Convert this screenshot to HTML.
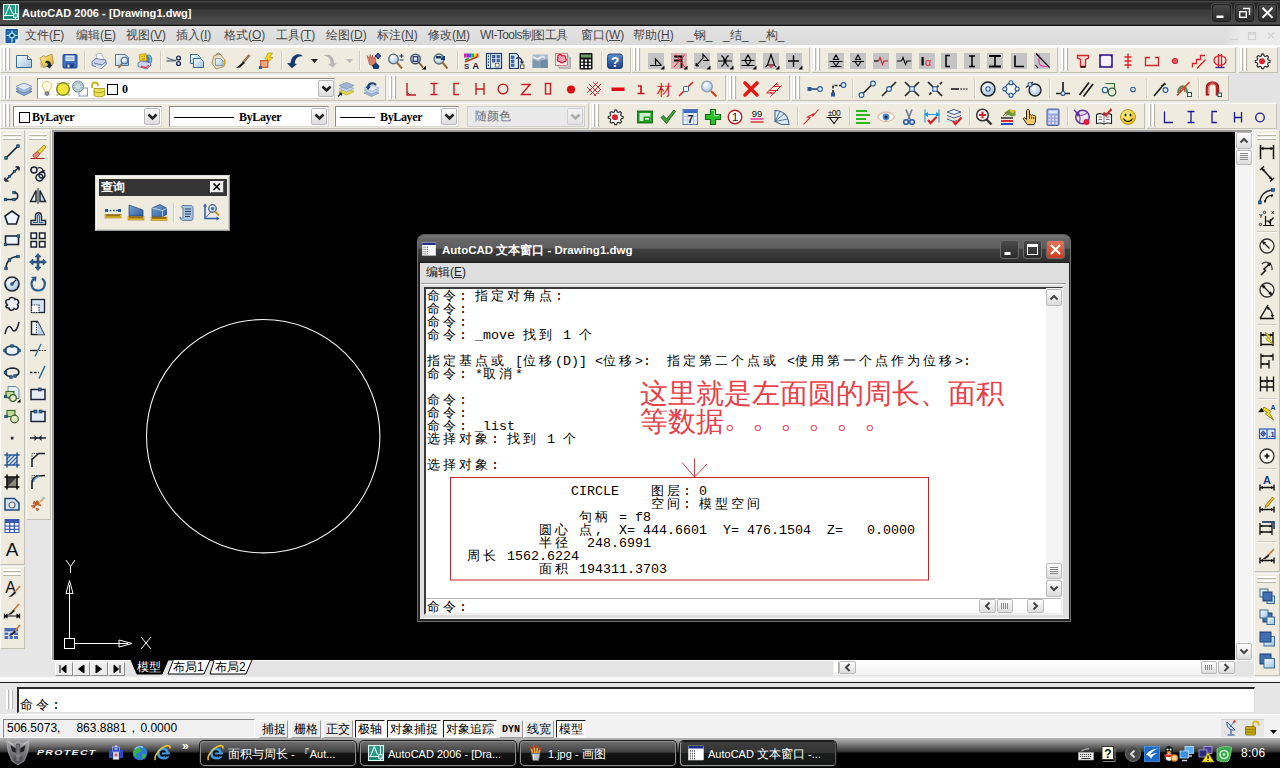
<!DOCTYPE html>
<html lang="zh"><head><meta charset="utf-8"><title>AutoCAD 2006 - [Drawing1.dwg]</title>
<style>
html,body{margin:0;padding:0}
body{width:1280px;height:768px;position:relative;overflow:hidden;background:#ebebeb;font-family:"Liberation Sans",sans-serif;font-size:12px;color:#000}
div,svg.i,span.a{position:absolute;box-sizing:border-box}
svg.i{overflow:visible}
.tb{background:#efebde;border:1px solid;border-color:#fbfbf8 #c4c1b4 #c4c1b4 #fbfbf8}
.grip{background:#fff;border-right:1px solid #b9b6a9}
.gripH{background:#fff;border-bottom:1px solid #b9b6a9}
.sep{width:1px;background:#d0cdc0;border-right:1px solid #f9f8f3;box-sizing:content-box}
.sepH{height:1px;background:#d0cdc0;border-bottom:1px solid #f9f8f3;box-sizing:content-box}
.menu{top:26px;height:19px;line-height:19px;color:#474747;font-size:12px;white-space:nowrap}
.combo{background:#fff;border:1px solid #8b8b8b;border-right-color:#d8d8d8;border-bottom-color:#d8d8d8}
.dd{background:linear-gradient(#fdfdfd,#dcdcdc);border:1px solid #b9b9b9;border-radius:2px}
.mono{font-family:"Liberation Mono",monospace}
.serif{font-family:"Liberation Serif",serif}
.tw{font-family:"Liberation Mono",monospace;font-size:13.33px;line-height:13px;white-space:pre;color:#000}
.tw .c{font-size:13px;letter-spacing:3px;font-family:"Liberation Mono",monospace}
.sb{top:720px;height:18px;line-height:17px;font-size:12px;text-align:center;white-space:nowrap;border:1px solid;overflow:hidden}
.sb.up{border-color:#fff #9a9a9a #9a9a9a #fff;background:#ececec}
.sb.dn{border-color:#1a1a1a #fff #fff #1a1a1a;background:#fafafa}
.tk{top:741px;height:25px;border:1px solid #8c8c8c;border-radius:4px;box-shadow:0 0 0 1px #1c1c1c;background:linear-gradient(#6c6c6c 0,#404040 45%,#151515 47%,#0a0a0a 100%);color:#fff;font-size:11px;line-height:24px;white-space:nowrap;overflow:hidden}
.tk .c{font-size:12px}
.t{white-space:nowrap}
</style></head>
<body>
<svg width="0" height="0" style="position:absolute"><defs>
<linearGradient id="gB" x1="0" y1="0" x2="1" y2="1"><stop offset="0" stop-color="#fafdff"/><stop offset="1" stop-color="#9cc3dc"/></linearGradient>
<linearGradient id="gBd" x1="0" y1="0" x2="1" y2="1"><stop offset="0" stop-color="#7aa7d6"/><stop offset="1" stop-color="#2d5a9a"/></linearGradient>
<linearGradient id="gY" x1="0" y1="0" x2="1" y2="1"><stop offset="0" stop-color="#fff3a0"/><stop offset="1" stop-color="#d9a520"/></linearGradient>
<linearGradient id="gG" x1="0" y1="0" x2="0" y2="1"><stop offset="0" stop-color="#f4f4f4"/><stop offset="1" stop-color="#9aa4b4"/></linearGradient>
<radialGradient id="gLens" cx=".4" cy=".35" r=".7"><stop offset="0" stop-color="#fff"/><stop offset="1" stop-color="#9fc0dc"/></radialGradient>
<radialGradient id="gSm" cx=".4" cy=".35" r=".7"><stop offset="0" stop-color="#fff9a0"/><stop offset="1" stop-color="#e8b800"/></radialGradient>
<linearGradient id="gHelp" x1="0" y1="0" x2="0" y2="1"><stop offset="0" stop-color="#5b8fd0"/><stop offset="1" stop-color="#1b3f85"/></linearGradient>
<linearGradient id="gMag" x1="0" y1="0" x2="1" y2="0"><stop offset="0" stop-color="#8a1c1c"/><stop offset=".5" stop-color="#e06a6a"/><stop offset="1" stop-color="#8a1c1c"/></linearGradient>
<linearGradient id="gTF" x1="0" y1="0" x2="0" y2="1"><stop offset="0" stop-color="#a8a8ae"/><stop offset=".5" stop-color="#77777c"/><stop offset="1" stop-color="#4a4a4e"/></linearGradient>
</defs></svg>
<div style="left:0px;top:0px;width:1280px;height:26px;background:linear-gradient(#202020 0,#222 3%,#525252 6.500%,#272727 11%,#2a2a2a 31%,#393939 40%,#4e4e4e 93%,#111 96.500%,#111 100%)"></div>
<svg class="i" style="left:0.5px;top:2.0px" width="20" height="20" viewBox="0 0 20 20"><rect x="2.500" y="2.500" width="15" height="15" fill="#2a9a86" stroke="#dffff6" stroke-width="1.100"/><path d="M4.500 13L8.300 3.800L11.500 11.500" fill="none" stroke="#dffff6" stroke-width="1.100"/><path d="M3 13.500H17M14.500 3V17" stroke="#dffff6" stroke-width="1"/><rect x="3.500" y="14.500" width="9.500" height="2" fill="#1f8070"/><rect x="12.700" y="11.700" width="3.600" height="3.600" fill="#2a9a86" stroke="#dffff6" stroke-width="1"/></svg>
<div class="t" style="left:22px;top:5px;color:#fff;font-weight:bold;font-size:11px;line-height:16px;letter-spacing:.05px">AutoCAD 2006 - [Drawing1.dwg]</div>
<div style="left:1212px;top:4px;width:19px;height:18px;background:linear-gradient(#484848,#2c2c2c);border:1px solid #222;border-radius:3px;box-shadow:0 0 0 1px #4a4a4a"></div>
<div style="left:1235px;top:4px;width:19px;height:18px;background:linear-gradient(#484848,#2c2c2c);border:1px solid #222;border-radius:3px;box-shadow:0 0 0 1px #4a4a4a"></div>
<div style="left:1258px;top:4px;width:19px;height:18px;background:linear-gradient(#484848,#2c2c2c);border:1px solid #222;border-radius:3px;box-shadow:0 0 0 1px #4a4a4a"></div>
<svg class="i" style="left:1212px;top:4px" width="66" height="18"><rect x="4.500" y="11.500" width="7" height="2.500" fill="#fff"/><path d="M31 4.500h6.500v6.500" fill="none" stroke="#fff" stroke-width="1.400"/><rect x="27.700" y="7.700" width="6.600" height="5.600" fill="none" stroke="#fff" stroke-width="1.400"/><path d="M50.500 3.800l10 10M60.500 3.800l-10 10" stroke="#fff" stroke-width="2" fill="none"/></svg>
<div style="left:0px;top:26px;width:1280px;height:20px;background:linear-gradient(#e4e4e4,#dadada)"></div>
<div style="left:1225px;top:26px;width:55px;height:20px;background:linear-gradient(90deg,#dedede,#ebebeb 30%)"></div>
<div style="left:0px;top:45px;width:1280px;height:2px;background:#fff"></div>
<svg class="i" style="left:1.0px;top:24.5px" width="22" height="22" viewBox="0 0 20 20"><path d="M3.500 3h12.500v10.500l-3 3.500h-9.500z" fill="#1c5a9c" stroke="#eaf4ff" stroke-width="1.200"/><path d="M10 5v11M5 9.500h10" stroke="#9ae8f0" stroke-width="1.200"/><circle cx="10" cy="9.500" r="2.200" fill="#1c5a9c" stroke="#9ae8f0" stroke-width="1.100"/><circle cx="10" cy="9.500" r=".9" fill="#012"/><path d="M13 16.500l3-3.500h-3z" fill="#eaf4ff"/><path d="M6 6h1M13 6h1M6 13h1M7 11h1M13 12h1" stroke="#5ac0e0" stroke-width="1"/></svg>
<svg class="i" style="left:1228px;top:28px" width="50" height="16"><g fill="none" stroke="#cfcfcf" stroke-width="1.200"><path d="M3 11.500h7"/><rect x="20.500" y="4.500" width="7" height="7"/><path d="M20.500 6h7"/><path d="M40 4.500l6 6M46 4.500l-6 6"/></g></svg>
<div style="left:0px;top:47px;width:1280px;height:84px;background:#ebebe9"></div>
<div style="left:1229px;top:73px;width:51px;height:29px;background:#e3e3e3"></div>
<div style="left:1277px;top:47px;width:3px;height:84px;background:#e3e3e3"></div>
<div style="left:0px;top:131px;width:53px;height:545px;background:#e6e6e6"></div>
<div style="left:1252px;top:131px;width:28px;height:545px;background:#e6e6e6"></div>
<div style="left:51px;top:130px;width:1202px;height:531px;background:#fff"></div>
<div style="left:52px;top:130px;width:1200px;height:530px;background:#9c9c9c"></div>
<div style="left:54px;top:132px;width:1181px;height:529px;background:#000"></div>
<div style="left:1235px;top:132px;width:17px;height:528px;background:#f4f4f4"></div>
<div style="left:53px;top:660px;width:1199px;height:16px;background:#e4e4e4"></div>
<div style="left:0px;top:676px;width:1280px;height:42px;background:#e6e6e6"></div>
<div style="left:0px;top:676px;width:1280px;height:6px;background:linear-gradient(#e8e8e8,#fdfdfd 40%,#f0f0f0)"></div>
<div style="left:0px;top:682px;width:1280px;height:1px;background:#1a1a1a"></div>
<div style="left:17px;top:687px;width:1238px;height:26px;background:#fff;border-top:2px solid #2a2a2a;border-left:2px solid #2a2a2a;border-right:1px solid #ddd;border-bottom:1px solid #ddd"></div>
<div style="left:0px;top:714px;width:1280px;height:24px;background:#f2f2f2;border-top:1px solid #fff"></div>
<div style="left:0px;top:738px;width:1280px;height:30px;background:linear-gradient(#b6b6b6 0,#a8a8a8 6%,#2e2e2e 47%,#000 49.500%,#000 100%)"></div>
<div class="menu" style="left:25px">文件(<u>F</u>)</div>
<div class="menu" style="left:76px">编辑(<u>E</u>)</div>
<div class="menu" style="left:126px">视图(<u>V</u>)</div>
<div class="menu" style="left:176px">插入(<u>I</u>)</div>
<div class="menu" style="left:224px">格式(<u>O</u>)</div>
<div class="menu" style="left:276px">工具(<u>T</u>)</div>
<div class="menu" style="left:326px">绘图(<u>D</u>)</div>
<div class="menu" style="left:377px">标注(<u>N</u>)</div>
<div class="menu" style="left:428px">修改(<u>M</u>)</div>
<div class="menu" style="left:480px"><span style="letter-spacing:-.6px">WI-Tools制图工具</span></div>
<div class="menu" style="left:581px">窗口(<u>W</u>)</div>
<div class="menu" style="left:633px">帮助(<u>H</u>)</div>
<div class="menu" style="left:687px">_钢_</div>
<div class="menu" style="left:723px">_结_</div>
<div class="menu" style="left:759px">_构_</div>
<div class="tb" style="left:0px;top:47px;width:631px;height:26px;"></div>
<div style="left:1px;top:48px;width:10px;height:24px;background:#e7e6e0"></div>
<div class="grip" style="left:3px;top:48px;width:3px;height:23px;"></div>
<div class="grip" style="left:7px;top:48px;width:3px;height:23px;"></div>
<svg class="i" style="left:14.0px;top:51.0px" width="20" height="20" viewBox="0 0 20 20"><path d="M2.500 4.500H13.500L17.500 8.500V16.500H2.500Z" fill="url(#gB)" stroke="#3f6a94"/><path d="M13.500 4.500V8.500H17.500" fill="#e8f2fa" stroke="#3f6a94"/></svg>
<svg class="i" style="left:37.0px;top:51.0px" width="20" height="20" viewBox="0 0 20 20"><path d="M3 7l4 -2.500 1 1.500 7-3 1.500 9.500-10 4z" fill="url(#gY)" stroke="#a8893a" stroke-width=".8"/><path d="M3 7l3 10 -2.500-1z" fill="#cdbf8a"/><path d="M9 10c3-1 5 1 5 4l2-.5-3.500 4-3.500-2.500 2-.5c0-2-1-3-3-2.500z" fill="#1d2a3a"/></svg>
<svg class="i" style="left:60.0px;top:51.0px" width="20" height="20" viewBox="0 0 20 20"><rect x="3" y="3.500" width="14" height="13.500" rx="1" fill="#3f6fc0" stroke="#24458a"/><rect x="5.500" y="4.500" width="9" height="5.500" fill="#d6e6f6"/><path d="M6.500 6.500h7M6.500 8h7" stroke="#8ab" stroke-width=".7"/><rect x="6" y="12.500" width="8" height="4.500" fill="#24458a"/><rect x="7.500" y="13.500" width="2" height="3" fill="#cfe0f4"/></svg>
<svg class="i" style="left:89.0px;top:51.0px" width="20" height="20" viewBox="0 0 20 20"><path d="M7 3.500l5-1.500 3 6-6 2z" fill="#fff" stroke="#8899bb" stroke-width=".7"/><path d="M3 10.500l4-3 9.500 1.500 1 4-5 4.500-9.500-3z" fill="#c9d3ea" stroke="#5566a0" stroke-width=".8"/><path d="M5 12l8 2 4-3.500" fill="none" stroke="#5566a0" stroke-width=".8"/><path d="M7 15.500l5 1.200 3-2.700" fill="none" stroke="#fff" stroke-width="1.2"/></svg>
<svg class="i" style="left:112.0px;top:51.0px" width="20" height="20" viewBox="0 0 20 20"><path d="M3.500 3.500H13L16.500 6.500V14.500H3.500Z" fill="url(#gB)" stroke="#56779a"/><circle cx="12.500" cy="9.500" r="3.300" fill="url(#gLens)" stroke="#4a6a8a" stroke-width="1.100"/><path d="M10 12.500L6.500 17" stroke="#9a6a4a" stroke-width="1.700"/></svg>
<svg class="i" style="left:135.0px;top:51.0px" width="20" height="20" viewBox="0 0 20 20"><path d="M11 4c4-2 7 2 6 6s-4 5-6 4z" fill="#3f7fc8"/><path d="M13 5c2 0 3 3 2 6" stroke="#9fd0f0" fill="none" stroke-width="1.200"/><rect x="4.500" y="3" width="7" height="7" rx="1" fill="#f4d21c" stroke="#b08a10" stroke-width=".7" transform="rotate(-8 8 6)"/><path d="M6.500 5.500h1M9 5.200h1M6.800 7.600c1 .8 2 .7 3-.2" stroke="#7a5a00" stroke-width=".8" fill="none"/><path d="M3 12l3-2 9 1.500 1 2.500-4 4-9-2.500z" fill="#c9d3ea" stroke="#5566a0" stroke-width=".8"/><path d="M6 15.500l5 1.200 3-2.400" fill="none" stroke="#e04040" stroke-width="1.300"/></svg>
<svg class="i" style="left:164.0px;top:51.0px" width="20" height="20" viewBox="0 0 20 20"><path d="M2.500 6.500l9 3.500M2.500 10l9.500 -.5" stroke="#4a5a7a" stroke-width="1.300" fill="none"/><path d="M2.500 6.500l6 1.500M2.500 10l6-.8" stroke="#c8d0e0" stroke-width=".5"/><circle cx="14.500" cy="7" r="1.900" fill="none" stroke="#1d2f5a" stroke-width="1.400"/><circle cx="14.500" cy="12.500" r="1.900" fill="none" stroke="#1d2f5a" stroke-width="1.400"/></svg>
<svg class="i" style="left:187.0px;top:51.0px" width="20" height="20" viewBox="0 0 20 20"><path d="M3.500 3.500H10.500L13.500 6.500V12.500H3.500Z" fill="url(#gB)" stroke="#3f6a94"/><path d="M6.500 7.500H13.500L16.500 10.500V16.500H6.500Z" fill="url(#gB)" stroke="#3f6a94"/></svg>
<svg class="i" style="left:209.0px;top:51.0px" width="20" height="20" viewBox="0 0 20 20"><path d="M5 4.500l6-1.500 5 6-1 6.500-8 2.500-4-6z" fill="#e9dfc0" stroke="#9a8a5a" stroke-width=".9"/><path d="M7 3.500l2.500-1.500 2 1.500" fill="none" stroke="#777" stroke-width="1"/><path d="M6.500 7.500h5l2.500 2.500v4.500h-7.500z" fill="url(#gB)" stroke="#6f8aa4" stroke-width=".8"/><path d="M15 9c1.500 1.500 1.500 3 .5 4.500" stroke="#d9a520" stroke-width="1.200" fill="none"/></svg>
<svg class="i" style="left:233.0px;top:51.0px" width="20" height="20" viewBox="0 0 20 20"><path d="M16.500 4l-7 8" stroke="#7a5a3a" stroke-width="2.200"/><path d="M16.500 4l-7 8" stroke="#c0a070" stroke-width=".8"/><path d="M10.500 10.500l1.500 1.500-5 4.500-4 .5 3-2.500z" fill="#1a1a1a"/></svg>
<svg class="i" style="left:256.0px;top:51.0px" width="20" height="20" viewBox="0 0 20 20"><path d="M12 2l4.500 0-3 4.500 3.500 0-7.500 7 2.500-5.500-3 0z" fill="#f8d81c" stroke="#b8940a" stroke-width=".7"/><rect x="4.500" y="9.500" width="7.500" height="7" fill="#f08a5a" stroke="#b0501a" stroke-width=".8"/><rect x="5.500" y="10.500" width="5.500" height="5" fill="#f6b090" opacity=".7"/><rect x="3" y="15" width="3" height="3" fill="#2a5aa8"/></svg>
<svg class="i" style="left:285.0px;top:51.0px" width="20" height="20" viewBox="0 0 20 20"><path d="M2 12.300L6.900 17.300L11.900 13L9.800 12.500C10 8 13 4.500 17.800 5.500C16 1.500 6.500 2 5.500 12Z" fill="#17386c"/></svg>
<svg class="i" style="left:320.0px;top:51.0px" width="20" height="20" viewBox="0 0 20 20"><path d="M3 5C8 1.500 13.500 4 14.300 12.300L16.900 12.300L12.500 16.800L8 13L10.800 12.600C10.500 7 7.500 4.500 3 5Z" fill="#b8b8b8"/></svg>
<svg class="i" style="left:363.0px;top:51.0px" width="20" height="20" viewBox="0 0 20 20"><path d="M4 4.500l2.500 3 .5-4 1.500 3.800 1-3.300 1 4 1.500-2.500 1 6.500-2.500 3-4-1.500z" fill="#d8806a" stroke="#a04a3a" stroke-width=".6"/><path d="M9 14.500l4-3 3.500 3.500-1 3h-5z" fill="#1d3a6a"/><path d="M15 2v6M12 5h6M15 2l-1.200 1.500h2.400zM15 8l-1.200-1.500h2.400zM12 5l1.500-1.200v2.400zM18 5l-1.500-1.200v2.400z" stroke="#1d3a8a" stroke-width=".9" fill="#1d3a8a"/></svg>
<svg class="i" style="left:386.0px;top:51.0px" width="20" height="20" viewBox="0 0 20 20"><circle cx="7.500" cy="8" r="4.800" fill="url(#gLens)" stroke="#556a7a" stroke-width="1.300"/><path d="M11 11.500l5 6" stroke="#9a6a3a" stroke-width="2"/><path d="M15.500 3v4M13.500 5h4M13.500 9h4" stroke="#1d2a5a" stroke-width="1.100"/></svg>
<svg class="i" style="left:408.0px;top:51.0px" width="20" height="20" viewBox="0 0 20 20"><circle cx="7.500" cy="8" r="4.800" fill="url(#gLens)" stroke="#445a6a" stroke-width="1.400"/><rect x="5.200" y="5.700" width="4.600" height="4.600" fill="none" stroke="#1d2a6a" stroke-width="1.200"/><path d="M11 11.500l4 5" stroke="#7a5a3a" stroke-width="2"/><path d="M18 14.500v4h-4z" fill="#000"/></svg>
<svg class="i" style="left:431.0px;top:51.0px" width="20" height="20" viewBox="0 0 20 20"><circle cx="8" cy="8" r="5" fill="url(#gLens)" stroke="#556a7a" stroke-width="1.300"/><path d="M5 5h5.500v2.500l2-2.500 1.500 0v4h-4v-1.500h-5z" fill="#1d3a6a"/><path d="M11.500 11.500l5 6" stroke="#9a6a3a" stroke-width="2"/></svg>
<svg class="i" style="left:461.0px;top:51.0px" width="20" height="20" viewBox="0 0 20 20"><rect x="3" y="2.500" width="2.500" height="4" fill="#e01ca0"/><rect x="5.500" y="2.500" width="2.500" height="4" fill="#8a2be2"/><rect x="8" y="2.500" width="2.500" height="4" fill="#2a6ae0"/><rect x="10.500" y="2.500" width="2.500" height="4" fill="#1cc03a"/><rect x="13" y="2.500" width="2.500" height="4" fill="#f0d01c"/><rect x="15.500" y="2.500" width="2" height="4" fill="#e83a1c"/><path d="M4 11l12-5" stroke="#c03a2a" stroke-width="1.600"/><path d="M4 9l4-1.500" stroke="#2a9a3a" stroke-width="1.500"/><text x="3" y="17.500" font-family="Liberation Sans,sans-serif" font-size="8" font-weight="bold" fill="#3a3a5a">S</text><text x="11.500" y="17.500" font-family="Liberation Sans,sans-serif" font-size="9" font-weight="bold" fill="#1a1a2a">A</text></svg>
<svg class="i" style="left:484.0px;top:51.0px" width="20" height="20" viewBox="0 0 20 20"><rect x="2.500" y="2.500" width="15" height="15" fill="#dcebf8" stroke="#1d3a6a" stroke-width="1.200"/><path d="M6.500 3v14" stroke="#1d3a6a" stroke-width=".8"/><path d="M4.500 4.500v11" stroke="#1d3a6a" stroke-width="1" stroke-dasharray="1.500 1.500"/><g fill="#4a7ab8" stroke="#1d3a6a" stroke-width=".6"><rect x="8.500" y="4.500" width="2.500" height="2.500"/><rect x="13" y="4.500" width="2.500" height="2.500"/><rect x="8.500" y="8.500" width="2.500" height="2.500"/><rect x="13" y="8.500" width="2.500" height="2.500"/></g><rect x="11.500" y="12.500" width="3.500" height="3.500" fill="#fffbe0" stroke="#555" stroke-width=".7"/></svg>
<svg class="i" style="left:507.0px;top:51.0px" width="20" height="20" viewBox="0 0 20 20"><path d="M2.500 2.500H9.500L11.500 4.500V17.500H2.500Z" fill="#dcebf8" stroke="#1d3a6a" stroke-width="1.200"/><g fill="#4a7ab8" stroke="#1d3a6a" stroke-width=".6"><rect x="4.500" y="5" width="2.500" height="2.500"/><rect x="4.500" y="9" width="2.500" height="2.500"/><rect x="4.500" y="13" width="2.500" height="2.500"/></g><path d="M9 7.500c3.500-2 6 0 6 3.500" fill="none" stroke="#1d2a4a" stroke-width="1.300"/><path d="M12.800 10.500h4.400l-2.200 2.700z" fill="#1d2a4a"/><rect x="13.500" y="14" width="3.500" height="3.500" fill="#fffbe0" stroke="#333" stroke-width=".8"/></svg>
<svg class="i" style="left:530.0px;top:51.0px" width="20" height="20" viewBox="0 0 20 20"><rect x="2.500" y="3.500" width="15.500" height="13.500" fill="#a9bccb"/><path d="M2.500 8l6 2.500 3-2 6.500 2v6.500h-15.500z" fill="#7f9bb2"/><path d="M3 6l5 2 4-2.500 3 1" stroke="#e4edf4" stroke-width="1.800" fill="none"/><path d="M11 10l6.500-2v9h-6.500z" fill="#6f8ca6"/></svg>
<svg class="i" style="left:553.0px;top:51.0px" width="20" height="20" viewBox="0 0 20 20"><path d="M6.500 6.500h11v11h-11z" fill="#c8c8c8" stroke="#9a9a9a" stroke-width=".6"/><path d="M5 5h11v11h-11z" fill="#e6e6e6" stroke="#9a9a9a" stroke-width=".6"/><rect x="2.500" y="2.500" width="12" height="12" fill="#fbe6ea" stroke="#c05a6a" stroke-width=".7"/><path d="M5 5c1-2 3-2 4 0 2-1.500 4 0 3.500 2 1.500 1.500.5 4-1.500 3.500-1 2-3.500 1.500-4-.0-2.500.5-3.500-2-2-3.500-1-1 0-2.500 0-2z" fill="#f6a8b4" stroke="#d8203a" stroke-width="1.300"/></svg>
<svg class="i" style="left:576.0px;top:51.0px" width="20" height="20" viewBox="0 0 20 20"><rect x="3.500" y="2" width="13" height="16.500" rx="1" fill="#141414"/><rect x="5" y="3.500" width="10" height="3" fill="#6a9a6a"/><g fill="#fff"><rect x="5" y="8.500" width="2.200" height="2"/><rect x="8.900" y="8.500" width="2.200" height="2"/><rect x="12.800" y="8.500" width="2.200" height="2"/><rect x="5" y="11.800" width="2.200" height="2"/><rect x="8.900" y="11.800" width="2.200" height="2"/><rect x="12.800" y="11.800" width="2.200" height="2"/><rect x="5" y="15.100" width="2.200" height="2"/><rect x="8.900" y="15.100" width="2.200" height="2"/><rect x="12.800" y="15.100" width="2.200" height="2"/></g></svg>
<svg class="i" style="left:605.0px;top:51.0px" width="20" height="20" viewBox="0 0 20 20"><rect x="2.500" y="3" width="15" height="14.500" rx="2.500" fill="url(#gHelp)" stroke="#16306a" stroke-width=".8"/><text x="10" y="15.500" text-anchor="middle" font-family="Liberation Sans,sans-serif" font-size="14" font-weight="bold" fill="#fff">?</text></svg>
<div class="sep" style="left:84px;top:51px;width:1px;height:19px;"></div>
<div class="sep" style="left:160px;top:51px;width:1px;height:19px;"></div>
<div class="sep" style="left:281px;top:51px;width:1px;height:19px;"></div>
<div class="sep" style="left:359px;top:51px;width:1px;height:19px;"></div>
<div class="sep" style="left:457px;top:51px;width:1px;height:19px;"></div>
<div class="sep" style="left:601px;top:51px;width:1px;height:19px;"></div>
<svg class="i" style="left:311px;top:59px" width="7" height="4"><path d="M0 0h7L3.5 4z" fill="#222"/></svg>
<svg class="i" style="left:346px;top:59px" width="7" height="4"><path d="M0 0h7L3.5 4z" fill="#bbb"/></svg>
<div class="tb" style="left:631px;top:47px;width:179px;height:26px;"></div>
<div style="left:632px;top:48px;width:9px;height:24px;background:#e7e6e0"></div>
<div class="grip" style="left:633px;top:48px;width:3px;height:23px;"></div>
<div class="grip" style="left:637px;top:48px;width:3px;height:23px;"></div>
<svg class="i" style="left:646.0px;top:51.0px" width="20" height="20" viewBox="0 0 20 20"><rect x="2" y="2" width="16" height="16" fill="#c4c4c4"/><path d="M4 14.500h11M9.500 14.500V8l6 6.500" fill="none" stroke="#000" stroke-width="1.200"/><path d="M18.500 14.500v4h-4z" fill="#000"/></svg>
<svg class="i" style="left:669.0px;top:51.0px" width="20" height="20" viewBox="0 0 20 20"><rect x="2" y="2" width="16" height="16" fill="#d8b4b4"/><path d="M5 5.500h8.500M5 9.500h8.500M12.500 5v12" stroke="#000" stroke-width="1.800" fill="none"/><path d="M5 16L16 3.500M7 3.500l9 13" stroke="#d8202a" stroke-width="1" fill="none"/><path d="M18.500 14.500v4h-4z" fill="#000"/></svg>
<svg class="i" style="left:692.0px;top:51.0px" width="20" height="20" viewBox="0 0 20 20"><rect x="2" y="2" width="16" height="16" fill="#c4c4c4"/><path d="M4 15l7-8M4 15l.3-3M4 15l3-.3M11 7V3.500l5.500 6H11" fill="none" stroke="#000" stroke-width="1.100"/><path d="M18.500 14.500v4h-4z" fill="#000"/></svg>
<svg class="i" style="left:715.0px;top:51.0px" width="20" height="20" viewBox="0 0 20 20"><rect x="2" y="2" width="16" height="16" fill="#c4c4c4"/><path d="M3 10h14M6.500 4.500c4 3 4 8 0 11M13.500 4.500c-4 3-4 8 0 11" fill="none" stroke="#000" stroke-width="1.200"/><path d="M18.500 14.500v4h-4z" fill="#000"/></svg>
<svg class="i" style="left:738.0px;top:51.0px" width="20" height="20" viewBox="0 0 20 20"><rect x="2" y="2" width="16" height="16" fill="#c4c4c4"/><path d="M3.500 9.500h13M3.500 14.500h13M10 4l3 5.500h-6zM7 9.500l3 5 3-5" fill="none" stroke="#000" stroke-width="1.100"/><path d="M18.500 14.500v4h-4z" fill="#000"/></svg>
<svg class="i" style="left:761.0px;top:51.0px" width="20" height="20" viewBox="0 0 20 20"><rect x="2" y="2" width="16" height="16" fill="#c4c4c4"/><path d="M10 3.500L6.500 14h7zM6.500 14l-2 2M13.500 14l1.500 2" fill="none" stroke="#000" stroke-width="1.100"/><path d="M10 13v4M8 15h4" stroke="#e02a3a" stroke-width="1.200"/><path d="M18.500 14.500v4h-4z" fill="#000"/></svg>
<svg class="i" style="left:784.0px;top:51.0px" width="20" height="20" viewBox="0 0 20 20"><rect x="2" y="2" width="16" height="16" fill="#c4c4c4"/><path d="M4 10h11M9.500 4v12" stroke="#000" stroke-width="1.300"/><path d="M18.500 14.500v4h-4z" fill="#000"/></svg>
<div class="tb" style="left:811px;top:47px;width:247px;height:26px;"></div>
<div style="left:812px;top:48px;width:9px;height:24px;background:#e7e6e0"></div>
<div class="grip" style="left:813px;top:48px;width:3px;height:23px;"></div>
<div class="grip" style="left:817px;top:48px;width:3px;height:23px;"></div>
<svg class="i" style="left:826.0px;top:51.0px" width="20" height="20" viewBox="0 0 20 20"><rect x="2" y="2" width="16" height="16" fill="#c4c4c4"/><path d="M3.500 10.500h13M4.500 15.500h11M10 4l2.500 4.500h-5zM7 10.500l3 4.500 3-4.500" fill="none" stroke="#000" stroke-width="1.100"/></svg>
<svg class="i" style="left:848.0px;top:51.0px" width="20" height="20" viewBox="0 0 20 20"><rect x="2" y="2" width="16" height="16" fill="#c4c4c4"/><path d="M4 10.500h12M10 4l2.500 4.500h-5zM7 10.500l3 4.500 3-4.500" fill="none" stroke="#000" stroke-width="1.100"/></svg>
<svg class="i" style="left:871.0px;top:51.0px" width="20" height="20" viewBox="0 0 20 20"><rect x="2" y="2" width="16" height="16" fill="#c4c4c4"/><path d="M3 10h4.500" stroke="#000" stroke-width="1.200"/><path d="M12.500 10h4.500" stroke="#d8202a" stroke-width="1.200"/><path d="M7.500 10l1.500-3.500 2.500 7 1.500-3.500" fill="none" stroke="#d8202a" stroke-width="1.100"/></svg>
<svg class="i" style="left:894.0px;top:51.0px" width="20" height="20" viewBox="0 0 20 20"><rect x="2" y="2" width="16" height="16" fill="#c4c4c4"/><path d="M3 10h4.500M12.500 10h4.500M7.500 10l1.500-3.500 2.500 7 1.500-3.500" fill="none" stroke="#000" stroke-width="1.100"/></svg>
<svg class="i" style="left:917.0px;top:51.0px" width="20" height="20" viewBox="0 0 20 20"><rect x="2" y="2" width="16" height="16" fill="#c4c4c4"/><rect x="4.500" y="6" width="2.200" height="8.500" fill="#000"/><text x="8" y="14.500" font-family="Liberation Sans,sans-serif" font-size="11" fill="#e02a2a">α</text></svg>
<svg class="i" style="left:939.0px;top:51.0px" width="20" height="20" viewBox="0 0 20 20"><rect x="2" y="2" width="16" height="16" fill="#c4c4c4"/><path d="M11 4.500H7v11h4" fill="none" stroke="#000" stroke-width="1.500"/></svg>
<svg class="i" style="left:962.0px;top:51.0px" width="20" height="20" viewBox="0 0 20 20"><rect x="2" y="2" width="16" height="16" fill="#c4c4c4"/><path d="M7 5h6M7 15.500h6M10 5v10.500" fill="none" stroke="#000" stroke-width="1.500"/></svg>
<svg class="i" style="left:985.0px;top:51.0px" width="20" height="20" viewBox="0 0 20 20"><rect x="2" y="2" width="16" height="16" fill="#c4c4c4"/><path d="M4 5h12M4 15.500h12" stroke="#000" stroke-width="2.200"/><path d="M10 5v10.500" stroke="#000" stroke-width="1.600"/></svg>
<svg class="i" style="left:1009.0px;top:51.0px" width="20" height="20" viewBox="0 0 20 20"><rect x="2" y="2" width="16" height="16" fill="#c4c4c4"/><path d="M6 4.500v11h9" fill="none" stroke="#000" stroke-width="1.600"/></svg>
<svg class="i" style="left:1032.0px;top:51.0px" width="20" height="20" viewBox="0 0 20 20"><rect x="2" y="2" width="16" height="16" fill="#c4c4c4"/><path d="M7 3.500v7c0 3.500 2 5 6 5h2" fill="none" stroke="#e040a0" stroke-width="1.200"/><path d="M4 2.500l13.500 14M3.500 14l2.500 3" stroke="#000" stroke-width="1.100" fill="none"/></svg>
<div class="tb" style="left:1059px;top:47px;width:177px;height:26px;"></div>
<div style="left:1060px;top:48px;width:9px;height:24px;background:#e7e6e0"></div>
<div class="grip" style="left:1061px;top:48px;width:3px;height:23px;"></div>
<div class="grip" style="left:1065px;top:48px;width:3px;height:23px;"></div>
<svg class="i" style="left:1073.0px;top:51.0px" width="20" height="20" viewBox="0 0 20 20"><path d="M4.500 4.500h11v2.500l-3 1.500v7h-5v-7l-3-1.500z" fill="#fbd8d0" stroke="#d8202a" stroke-width="1.300"/><path d="M7.500 16h5" stroke="#000" stroke-width="1.400"/></svg>
<svg class="i" style="left:1096.0px;top:51.0px" width="20" height="20" viewBox="0 0 20 20"><rect x="4" y="4" width="12" height="12" fill="#f4f0ff" stroke="#3a1a8a" stroke-width="1.600"/><path d="M4 4l2.500 0 -2.500 2.500zM16 4v2.500l-2.500-2.500zM4 16v-2.500l2.500 2.500zM16 16h-2.500l2.500-2.500z" fill="#3a1a8a"/></svg>
<svg class="i" style="left:1118.0px;top:51.0px" width="20" height="20" viewBox="0 0 20 20"><path d="M10 2.500v15M6.500 6h7M6.500 10h7M6.500 14h7" fill="none" stroke="#d8202a" stroke-width="1.300"/></svg>
<svg class="i" style="left:1142.0px;top:51.0px" width="20" height="20" viewBox="0 0 20 20"><path d="M8 6.500H3.500v8h13v-8H13" fill="none" stroke="#d8202a" stroke-width="1.300"/></svg>
<svg class="i" style="left:1165.0px;top:51.0px" width="20" height="20" viewBox="0 0 20 20"><circle cx="10" cy="10" r="2.700" fill="#f05a5a" stroke="#d8202a" stroke-width="1"/></svg>
<svg class="i" style="left:1189.0px;top:51.0px" width="20" height="20" viewBox="0 0 20 20"><path d="M3.500 16.500v-4h4v-4h4v-4h4.500M8 17.500L16.500 8.500" fill="none" stroke="#d8202a" stroke-width="1.300"/></svg>
<svg class="i" style="left:1210.0px;top:51.0px" width="20" height="20" viewBox="0 0 20 20"><ellipse cx="10" cy="9.500" rx="6" ry="4.800" fill="none" stroke="#d8202a" stroke-width="1.300"/><path d="M8.500 3v13.500M11.500 3v13.500" fill="none" stroke="#d8202a" stroke-width="1.300"/><path d="M5.500 16.500h9" stroke="#2a1a9a" stroke-width="1.300"/></svg>
<div class="tb" style="left:1238px;top:47px;width:40px;height:26px;"></div>
<div style="left:1239px;top:48px;width:9px;height:24px;background:#e7e6e0"></div>
<div class="grip" style="left:1240px;top:48px;width:3px;height:23px;"></div>
<div class="grip" style="left:1244px;top:48px;width:3px;height:23px;"></div>
<svg class="i" style="left:1252.0px;top:51.0px" width="20" height="20" viewBox="0 0 20 20"><path d="M10 2.800l1.600.2.500 1.900 1.300.6 1.800-.9 1.300 1.300-.9 1.800.6 1.300 1.900.5v1.800l-1.900.5-.6 1.300.9 1.800-1.300 1.300-1.800-.9-1.300.6-.5 1.900h-1.800l-.5-1.900-1.300-.6-1.800.9-1.300-1.300.9-1.800-.6-1.300-1.900-.5v-1.800l1.900-.5.6-1.300-.9-1.800 1.300-1.300 1.800.9 1.300-.6.500-1.900z" fill="#fbfbfb" stroke="#222" stroke-width="1.100" stroke-linejoin="round"/><circle cx="10" cy="10.300" r="3" fill="#e0202a"/></svg>
<div class="tb" style="left:0px;top:75px;width:386px;height:26px;"></div>
<div style="left:1px;top:76px;width:10px;height:24px;background:#e7e6e0"></div>
<div class="grip" style="left:3px;top:76px;width:3px;height:23px;"></div>
<div class="grip" style="left:7px;top:76px;width:3px;height:23px;"></div>
<svg class="i" style="left:14.0px;top:79.0px" width="20" height="20" viewBox="0 0 20 20"><path d="M2 12.500l8-3.500 8 3.500-8 4z" fill="#8faad0" stroke="#4a6a9a" stroke-width=".8"/><path d="M2 10l8-3.500 8 3.500-8 4z" fill="#b8cce6" stroke="#5a7aaa" stroke-width=".8"/><path d="M2 7.500l8-3.500 8 3.500-8 4z" fill="#dfe9f5" stroke="#6a8aba" stroke-width=".8"/></svg>
<div class="combo" style="left:37px;top:78px;width:298px;height:21px;"></div>
<svg class="i" style="left:37.0px;top:79.0px" width="20" height="20" viewBox="0 0 20 20"><path d="M10 2.500c-3 0-4.500 2-4.500 4.200 0 2.300 2 3.300 2.300 5.800h4.400c.3-2.500 2.300-3.500 2.300-5.800 0-2.200-1.500-4.200-4.500-4.200z" fill="#fffbe0" stroke="#d8c060" stroke-width=".9"/><path d="M8 13h4v2.500c-.5 1.500-3.500 1.500-4 0z" fill="#8a8a9a" stroke="#555" stroke-width=".5"/></svg>
<svg class="i" style="left:53.0px;top:79.0px" width="20" height="20" viewBox="0 0 20 20"><circle cx="10" cy="10" r="6.300" fill="#f4e63a" stroke="#7a8a2a" stroke-width="1.500"/><path d="M3.500 16.500l2.500-2M16.500 16.500l-2.500-2M4 4l2 2M16 4l-2 2" stroke="#a8b040" stroke-width="1.200"/></svg>
<svg class="i" style="left:70.0px;top:79.0px" width="20" height="20" viewBox="0 0 20 20"><rect x="9" y="9" width="8.500" height="8" fill="#fff" stroke="#7f9ac0" stroke-width="1"/><circle cx="8" cy="7.500" r="5.500" fill="#a9c0c4" stroke="#6f8a9a" stroke-width=".9"/><path d="M8 2.500v10M3 7.500h10M4.500 4l7 7M11.500 4l-7 7" stroke="#d4e0e4" stroke-width=".9"/><circle cx="8" cy="7.500" r="2" fill="none" stroke="#d4e0e4" stroke-width=".9"/></svg>
<svg class="i" style="left:88.0px;top:79.0px" width="20" height="20" viewBox="0 0 20 20"><path d="M4 9V6.500c0-4 6-4 6 0V7" fill="none" stroke="#c8b020" stroke-width="1.800"/><path d="M6 9.500h10.500v7c-2 1.800-8.500 1.800-10.500 0z" fill="#e8e050" stroke="#a09010" stroke-width=".8"/><path d="M6 12.500c3 1.500 7.500 1.500 10.500 0" fill="none" stroke="#a09010" stroke-width=".7"/><path d="M11 7l1-2 1.500 1.500" fill="none" stroke="#fff" stroke-width="1"/></svg>
<div style="left:107px;top:84px;width:11px;height:11px;border:1px solid #000;background:#fff"></div>
<div class="t serif" style="left:122px;top:82px;font-size:12px;line-height:14px;font-weight:bold">0</div>
<div class="dd" style="left:318px;top:80px;width:16px;height:17px;"></div>
<svg class="i" style="left:321px;top:85px" width="11" height="8"><path d="M1.500 1.500l4 4 4-4" fill="none" stroke="#1a1a1a" stroke-width="2.500"/></svg>
<svg class="i" style="left:336.0px;top:79.0px" width="20" height="20" viewBox="0 0 20 20"><path d="M3 12.500l7.500-3 7.500 3-7.500 3.500z" fill="#e8d83a" stroke="#a89a20" stroke-width=".6"/><path d="M3 9.500l7.500-3 7.500 3-7.500 3.500z" fill="#c4d4e8" stroke="#7f9ac0" stroke-width=".6"/><path d="M3 6.500l7.500-3 7.500 3-7.500 3.500z" fill="#9fb6d4" stroke="#6f8ab0" stroke-width=".6"/><path d="M2 17.500l3.500-3.500M5.500 14v2.500M5.500 14h-2.500" stroke="#1d2a5a" stroke-width="1.200" fill="none"/></svg>
<svg class="i" style="left:361.0px;top:79.0px" width="20" height="20" viewBox="0 0 20 20"><path d="M3 14l7.500-3 7.500 3-7.500 3.500z" fill="#9fb6d4" stroke="#6f8ab0" stroke-width=".6"/><path d="M3 11.500l7.500-3 7.500 3-7.500 3.500z" fill="#c4d4e8" stroke="#7f9ac0" stroke-width=".6"/><path d="M3 9l7.500-3 7.500 3-7.500 3.500z" fill="#dfe9f5" stroke="#8fa8cc" stroke-width=".6"/><path d="M7 8.500c0-4 5-6 8-2.500" fill="none" stroke="#1c3f7a" stroke-width="2"/><path d="M4.500 7.500h5.500l-3 3.500z" fill="#1c3f7a"/></svg>
<div class="tb" style="left:387px;top:75px;width:339px;height:26px;"></div>
<div style="left:388px;top:76px;width:9px;height:24px;background:#e7e6e0"></div>
<div class="grip" style="left:389px;top:76px;width:3px;height:23px;"></div>
<div class="grip" style="left:393px;top:76px;width:3px;height:23px;"></div>
<svg class="i" style="left:401.0px;top:79.0px" width="20" height="20" viewBox="0 0 20 20"><path d="M6 4v12h9" fill="none" stroke="#c81a24" stroke-width="1.400"/><path d="M6 13l3 3" stroke="#c81a24" stroke-width="1"/></svg>
<svg class="i" style="left:424.0px;top:79.0px" width="20" height="20" viewBox="0 0 20 20"><path d="M6.500 4.500h7M6.500 15.500h7M10 4.500v11" fill="none" stroke="#c81a24" stroke-width="1.400"/></svg>
<svg class="i" style="left:446.0px;top:79.0px" width="20" height="20" viewBox="0 0 20 20"><path d="M13 4.500H8v11h5" fill="none" stroke="#c81a24" stroke-width="1.400"/></svg>
<svg class="i" style="left:470.0px;top:79.0px" width="20" height="20" viewBox="0 0 20 20"><path d="M6 4v12M14 4v12M6 10h8" fill="none" stroke="#c81a24" stroke-width="1.400"/></svg>
<svg class="i" style="left:493.0px;top:79.0px" width="20" height="20" viewBox="0 0 20 20"><circle cx="10" cy="10" r="4.800" fill="none" stroke="#c81a24" stroke-width="1.400"/></svg>
<svg class="i" style="left:516.0px;top:79.0px" width="20" height="20" viewBox="0 0 20 20"><path d="M5.500 5.500h8.500L5.500 15.500h9.500" fill="none" stroke="#c81a24" stroke-width="1.400"/></svg>
<svg class="i" style="left:538.0px;top:79.0px" width="20" height="20" viewBox="0 0 20 20"><rect x="7.500" y="4.500" width="5" height="10.500" fill="none" stroke="#c81a24" stroke-width="1.400"/></svg>
<svg class="i" style="left:561.0px;top:79.0px" width="20" height="20" viewBox="0 0 20 20"><circle cx="10" cy="10.500" r="4" fill="#e00a14"/></svg>
<svg class="i" style="left:584.0px;top:79.0px" width="20" height="20" viewBox="0 0 20 20"><path d="M3 8l9 9M5 5l10 10M9 3l8 8M17 5L6 16M14 3L3 14M17 10l-7 7" fill="none" stroke="#c81a24" stroke-width=".9"/></svg>
<svg class="i" style="left:608.0px;top:79.0px" width="20" height="20" viewBox="0 0 20 20"><rect x="3.500" y="8.500" width="13" height="3.500" fill="#e00a14"/></svg>
<svg class="i" style="left:631.0px;top:79.0px" width="20" height="20" viewBox="0 0 20 20"><path d="M7 7h3v7.500M6.500 14.500h7" fill="none" stroke="#c81a24" stroke-width="1.700"/></svg>
<svg class="i" style="left:654.0px;top:79.0px" width="20" height="20" viewBox="0 0 20 20"><text x="10" y="16" text-anchor="middle" font-family="Liberation Sans,sans-serif" font-size="15" fill="#c81a24">材</text></svg>
<svg class="i" style="left:676.0px;top:79.0px" width="20" height="20" viewBox="0 0 20 20"><path d="M3 17L17 3" stroke="#d8202a" stroke-width="1.600"/><rect x="7.500" y="7.500" width="5" height="5" rx="1" fill="#eaf4ff" stroke="#3a5a8a" stroke-width="1"/></svg>
<svg class="i" style="left:699.0px;top:79.0px" width="20" height="20" viewBox="0 0 20 20"><circle cx="8" cy="7.500" r="5.300" fill="url(#gLens)" stroke="#8aa0b0" stroke-width="1.300"/><path d="M12 12l5.500 5.500" stroke="#e03a1a" stroke-width="2"/></svg>
<div class="tb" style="left:727px;top:75px;width:63px;height:26px;"></div>
<div style="left:728px;top:76px;width:9px;height:24px;background:#e7e6e0"></div>
<div class="grip" style="left:729px;top:76px;width:3px;height:23px;"></div>
<div class="grip" style="left:733px;top:76px;width:3px;height:23px;"></div>
<svg class="i" style="left:741.0px;top:79.0px" width="20" height="20" viewBox="0 0 20 20"><path d="M4 4l12 12M16 4L4 16" stroke="#e81a10" stroke-width="3.600" stroke-linecap="round"/></svg>
<svg class="i" style="left:764.0px;top:79.0px" width="20" height="20" viewBox="0 0 20 20"><path d="M2.500 14l11-10.500M6.500 17.500l11-11M2.500 14h8M9 7.500h8.500M5 11.500h9" fill="none" stroke="#d8202a" stroke-width="1"/><path d="M12 5.500l2.500.5M8 14l-2.500-.5" stroke="#d8202a" stroke-width="1"/></svg>
<div class="tb" style="left:791px;top:75px;width:438px;height:26px;"></div>
<div style="left:792px;top:76px;width:9px;height:24px;background:#e7e6e0"></div>
<div class="grip" style="left:793px;top:76px;width:3px;height:23px;"></div>
<div class="grip" style="left:797px;top:76px;width:3px;height:23px;"></div>
<svg class="i" style="left:805.0px;top:79.0px" width="20" height="20" viewBox="0 0 20 20"><path d="M4 10h9" stroke="#2a4a7a" stroke-width="1.600"/><rect x="2.500" y="8" width="4" height="4" fill="#2a5a9a"/><circle cx="15" cy="10" r="2.400" fill="#e4f0fc" stroke="#2a5a9a" stroke-width="1.100"/></svg>
<svg class="i" style="left:828.0px;top:79.0px" width="20" height="20" viewBox="0 0 20 20"><path d="M5 14V6.500h9" fill="none" stroke="#222" stroke-width="1.600" stroke-dasharray="3 1.500"/><rect x="3" y="13.500" width="4" height="4" fill="#2a5a9a"/><circle cx="15.500" cy="6" r="2.400" fill="#e4f0fc" stroke="#2a5a9a" stroke-width="1.100"/></svg>
<svg class="i" style="left:857.0px;top:79.0px" width="20" height="20" viewBox="0 0 20 20"><path d="M5.500 15L15 5.500" stroke="#222" stroke-width="1.600"/><circle cx="16" cy="4.500" r="2.400" fill="#e4f0fc" stroke="#2a5a9a" stroke-width="1.100"/><circle cx="4.500" cy="16" r="2.400" fill="#e4f0fc" stroke="#2a5a9a" stroke-width="1.100"/></svg>
<svg class="i" style="left:879.0px;top:79.0px" width="20" height="20" viewBox="0 0 20 20"><path d="M3 17L17 3" stroke="#222" stroke-width="1.600"/><circle cx="10" cy="10" r="2.400" fill="#e4f0fc" stroke="#2a5a9a" stroke-width="1.100"/></svg>
<svg class="i" style="left:902.0px;top:79.0px" width="20" height="20" viewBox="0 0 20 20"><path d="M3 3l14 14M17 3L3 17" stroke="#222" stroke-width="1.700"/><rect x="7.800" y="7.800" width="4.400" height="4.400" fill="#e4f0fc" stroke="#2a5a9a" stroke-width="1.100"/></svg>
<svg class="i" style="left:925.0px;top:79.0px" width="20" height="20" viewBox="0 0 20 20"><path d="M3 3l14 14" stroke="#222" stroke-width="1.700"/><path d="M17 3L3 17" stroke="#222" stroke-width="1.700" stroke-dasharray="3 2"/><rect x="7.800" y="7.800" width="4.400" height="4.400" fill="#e4f0fc" stroke="#2a5a9a" stroke-width="1.100"/></svg>
<svg class="i" style="left:949.0px;top:79.0px" width="20" height="20" viewBox="0 0 20 20"><path d="M2 10h8" stroke="#333" stroke-width="1.800"/><path d="M11.500 10h7" stroke="#333" stroke-width="1.600" stroke-dasharray="1.500 1.200"/></svg>
<svg class="i" style="left:978.0px;top:79.0px" width="20" height="20" viewBox="0 0 20 20"><circle cx="10" cy="10" r="7" fill="url(#gLens)" stroke="#222" stroke-width="1.500"/><circle cx="10" cy="10" r="2.200" fill="#e4f0fc" stroke="#2a5a9a" stroke-width="1.100"/></svg>
<svg class="i" style="left:1001.0px;top:79.0px" width="20" height="20" viewBox="0 0 20 20"><circle cx="10" cy="10" r="5.800" fill="#f4f8fc" stroke="#2a5a9a" stroke-width="1.300"/><g fill="#e4f0fc" stroke="#2a5a9a" stroke-width="1.100"><circle cx="10" cy="3.800" r="2"/><circle cx="10" cy="16.200" r="2"/><circle cx="3.800" cy="10" r="2"/><circle cx="16.200" cy="10" r="2"/></g></svg>
<svg class="i" style="left:1024.0px;top:79.0px" width="20" height="20" viewBox="0 0 20 20"><circle cx="11" cy="11" r="6" fill="url(#gLens)" stroke="#222" stroke-width="1.400"/><path d="M2 8.500L9 3" stroke="#222" stroke-width="1.300"/><circle cx="6" cy="5.500" r="2" fill="#e4f0fc" stroke="#2a5a9a" stroke-width="1.100"/></svg>
<svg class="i" style="left:1053.0px;top:79.0px" width="20" height="20" viewBox="0 0 20 20"><path d="M3 14.500h14M10 3v11" stroke="#222" stroke-width="1.700"/><circle cx="10" cy="14.500" r="2" fill="#e4f0fc" stroke="#2a5a9a" stroke-width="1.100"/></svg>
<svg class="i" style="left:1076.0px;top:79.0px" width="20" height="20" viewBox="0 0 20 20"><path d="M3.500 16L13 3.500M7.500 17.500L17 5" stroke="#222" stroke-width="1.800"/></svg>
<svg class="i" style="left:1099.0px;top:79.0px" width="20" height="20" viewBox="0 0 20 20"><path d="M6.500 4.500h9v6.500" fill="#dcecd0" stroke="#3a6a3a" stroke-width="1.200"/><circle cx="6" cy="11" r="2.800" fill="#e4f0fc" stroke="#2a5a9a" stroke-width="1.100"/><circle cx="13" cy="13" r="3.800" fill="#e4f0dc" stroke="#3a5a3a" stroke-width="1.300"/></svg>
<svg class="i" style="left:1123.0px;top:79.0px" width="20" height="20" viewBox="0 0 20 20"><circle cx="10" cy="10.500" r="2.300" fill="#e4f0fc" stroke="#2a5a9a" stroke-width="1.100"/></svg>
<svg class="i" style="left:1151.0px;top:79.0px" width="20" height="20" viewBox="0 0 20 20"><path d="M3 17L14 4" stroke="#222" stroke-width="1.700"/><path d="M10 7l5-2" stroke="#222" stroke-width="1.100"/><circle cx="14.500" cy="11" r="2.400" fill="#e4f0fc" stroke="#2a5a9a" stroke-width="1.100"/></svg>
<svg class="i" style="left:1174.0px;top:79.0px" width="20" height="20" viewBox="0 0 20 20"><path d="M4 14c0-8 9-10 9 0" fill="none" stroke="#5a8a5a" stroke-width="2"/><path d="M6 13c0-5 5-6 5 0" fill="none" stroke="#9a5a4a" stroke-width="1.500"/><path d="M3 16.500L15.500 3" stroke="#d8402a" stroke-width="1.700"/><rect x="13.500" y="13.500" width="4" height="4" fill="#fff" stroke="#3a5a4a" stroke-width="1"/></svg>
<svg class="i" style="left:1203.0px;top:79.0px" width="20" height="20" viewBox="0 0 20 20"><path d="M4.500 16.500V8.500c0-6 10-6 10 0v8" fill="none" stroke="url(#gMag)" stroke-width="3.400"/><path d="M4.500 16.500V8.500c0-6 10-6 10 0v8" fill="none" stroke="#b02a2a" stroke-width="3.400" opacity=".55"/><path d="M5.300 15V9c0-4 6-5 7.500-2" fill="none" stroke="#f0a0a0" stroke-width=".9"/><rect x="15" y="14" width="3.500" height="3.500" fill="#fff" stroke="#2a5a5a" stroke-width="1"/></svg>
<div class="sep" style="left:852px;top:79px;width:1px;height:19px;"></div>
<div class="sep" style="left:974px;top:79px;width:1px;height:19px;"></div>
<div class="sep" style="left:1049px;top:79px;width:1px;height:19px;"></div>
<div class="sep" style="left:1146px;top:79px;width:1px;height:19px;"></div>
<div class="sep" style="left:1198px;top:79px;width:1px;height:19px;"></div>
<div class="tb" style="left:0px;top:102.5px;width:589px;height:26px;"></div>
<div style="left:1px;top:103.5px;width:10px;height:24px;background:#e7e6e0"></div>
<div class="grip" style="left:3px;top:103.5px;width:3px;height:23px;"></div>
<div class="grip" style="left:7px;top:103.5px;width:3px;height:23px;"></div>
<div class="combo" style="left:13px;top:105.5px;width:149px;height:21px;"></div>
<div class="dd" style="left:144px;top:107.5px;width:16px;height:17px;"></div>
<svg class="i" style="left:146.5px;top:112.5px" width="11" height="8"><path d="M1.500 1.500l4 4 4-4" fill="none" stroke="#222" stroke-width="2.500"/></svg>
<div style="left:19px;top:112px;width:11px;height:11px;border:1px solid #000;background:#fff"></div>
<div class="t serif" style="left:32px;top:110px;font-size:12px;line-height:14px;font-weight:bold;letter-spacing:-.35px">ByLayer</div>
<div class="combo" style="left:169px;top:105.5px;width:160px;height:21px;"></div>
<div class="dd" style="left:311px;top:107.5px;width:16px;height:17px;"></div>
<svg class="i" style="left:313.5px;top:112.5px" width="11" height="8"><path d="M1.500 1.500l4 4 4-4" fill="none" stroke="#222" stroke-width="2.500"/></svg>
<div style="left:174px;top:117px;width:60px;height:1px;background:#000"></div>
<div class="t serif" style="left:239px;top:110px;font-size:12px;line-height:14px;font-weight:bold;letter-spacing:-.35px">ByLayer</div>
<div class="combo" style="left:335px;top:105.5px;width:124px;height:21px;"></div>
<div class="dd" style="left:441px;top:107.5px;width:16px;height:17px;"></div>
<svg class="i" style="left:443.5px;top:112.5px" width="11" height="8"><path d="M1.500 1.500l4 4 4-4" fill="none" stroke="#222" stroke-width="2.500"/></svg>
<div style="left:340px;top:117px;width:35px;height:1px;background:#000"></div>
<div class="t serif" style="left:380px;top:110px;font-size:12px;line-height:14px;font-weight:bold;letter-spacing:-.35px">ByLayer</div>
<div class="combo" style="left:467px;top:105.5px;width:118px;height:21px;background:#e9e9e9;border-color:#d0d0d0"></div>
<div class="dd" style="left:567px;top:107.5px;width:16px;height:17px;opacity:.55"></div>
<svg class="i" style="left:569.5px;top:112.5px" width="11" height="8"><path d="M1.500 1.500l4 4 4-4" fill="none" stroke="#aaa" stroke-width="2.500"/></svg>
<div class="t" style="left:475px;top:109px;font-size:12px;line-height:15px;color:#6d6d6d">随颜色</div>
<div class="tb" style="left:590px;top:102.5px;width:555px;height:26px;"></div>
<div style="left:591px;top:103.5px;width:9px;height:24px;background:#e7e6e0"></div>
<div class="grip" style="left:592px;top:103.5px;width:3px;height:23px;"></div>
<div class="grip" style="left:596px;top:103.5px;width:3px;height:23px;"></div>
<svg class="i" style="left:605.0px;top:107.0px" width="20" height="20" viewBox="0 0 20 20"><path d="M10 2.800l1.600.2.500 1.900 1.300.6 1.800-.9 1.300 1.300-.9 1.800.6 1.300 1.900.5v1.800l-1.900.5-.6 1.300.9 1.800-1.300 1.300-1.800-.9-1.300.6-.5 1.900h-1.800l-.5-1.900-1.300-.6-1.800.9-1.300-1.300.9-1.800-.6-1.300-1.900-.5v-1.800l1.900-.5.6-1.300-.9-1.800 1.300-1.300 1.800.9 1.300-.6.500-1.900z" fill="#fbfbfb" stroke="#222" stroke-width="1.100" stroke-linejoin="round"/><circle cx="10" cy="10.300" r="3" fill="#e0202a"/></svg>
<svg class="i" style="left:635.0px;top:107.0px" width="20" height="20" viewBox="0 0 20 20"><rect x="2.500" y="4" width="15" height="12" fill="#1e9a1e" stroke="#0c5a0c" stroke-width=".8"/><rect x="4.500" y="6" width="11" height="8" fill="#cfeccf"/><rect x="8.500" y="9.500" width="7" height="4.500" fill="#1e9a1e"/><rect x="10" y="11" width="4" height="1.800" fill="#cfeccf"/></svg>
<svg class="i" style="left:658.0px;top:107.0px" width="20" height="20" viewBox="0 0 20 20"><path d="M3 10.500l2.500-2 3 3.500 7.500-9 1.500 1.500-9 12z" fill="#3aa03a" stroke="#1c5a1c" stroke-width=".8"/></svg>
<svg class="i" style="left:680.0px;top:107.0px" width="20" height="20" viewBox="0 0 20 20"><rect x="3" y="2.500" width="14.500" height="15" fill="#eef4fc" stroke="#5a7ab0" stroke-width="1"/><rect x="3.500" y="3" width="13.500" height="3" fill="#3a6ac8"/><path d="M3.500 9.500h13.500M3.500 13h13.500M7 6v11M13.500 6v11" stroke="#a9c0e4" stroke-width=".8"/><text x="10.500" y="15.500" text-anchor="middle" font-family="Liberation Sans,sans-serif" font-size="10.500" font-weight="bold" fill="#222">7</text></svg>
<svg class="i" style="left:703.0px;top:107.0px" width="20" height="20" viewBox="0 0 20 20"><path d="M7.500 2.500h5v5h5v5h-5v5h-5v-5h-5v-5h5z" fill="#2cc02c" stroke="#0c6a0c" stroke-width="1.100"/><path d="M8.500 3.500h3v5h5" fill="none" stroke="#9af09a" stroke-width="1"/></svg>
<svg class="i" style="left:725.0px;top:107.0px" width="20" height="20" viewBox="0 0 20 20"><circle cx="10" cy="10" r="6.800" fill="#fff" stroke="#c81a24" stroke-width="1.400"/><text x="10" y="14" text-anchor="middle" font-family="Liberation Sans,sans-serif" font-size="11" fill="#111">1</text></svg>
<svg class="i" style="left:747.0px;top:107.0px" width="20" height="20" viewBox="0 0 20 20"><text x="10" y="9.500" text-anchor="middle" font-family="Liberation Sans,sans-serif" font-size="9.500" fill="#111">99</text><path d="M3.500 12h13" stroke="#e01ca0" stroke-width="1.300"/><path d="M3.500 15h13" stroke="#d8202a" stroke-width="1.300"/></svg>
<svg class="i" style="left:772.0px;top:107.0px" width="20" height="20" viewBox="0 0 20 20"><path d="M3 3.500c8 0 13.500 5 14 14h-7.500l-6.500-3z" fill="#dcebf8" stroke="#4a6a8a" stroke-width="1.100"/><path d="M3 14.500L8 4M3 14.500l9.500-8M3 14.500l13 -2.500" stroke="#4a6a8a" stroke-width=".9" fill="none"/></svg>
<svg class="i" style="left:801.0px;top:107.0px" width="20" height="20" viewBox="0 0 20 20"><path d="M2.500 17.500L9 10.500L6.500 10L12.500 7L11.500 9.500L17.500 2.500" fill="none" stroke="#d8202a" stroke-width="1.100"/></svg>
<svg class="i" style="left:824.0px;top:107.0px" width="20" height="20" viewBox="0 0 20 20"><text x="10" y="8.500" text-anchor="middle" font-family="Liberation Sans,sans-serif" font-size="8.500" fill="#111" letter-spacing="-.5">±00</text><path d="M2.500 10.500h15M5.500 10.500l4.500 6 4.500-6" fill="none" stroke="#111" stroke-width="1.100"/></svg>
<svg class="i" style="left:853.0px;top:107.0px" width="20" height="20" viewBox="0 0 20 20"><path d="M3 4h11M3 8h14M3 12h10M3 16h14" stroke="#2ab81c" stroke-width="2"/></svg>
<svg class="i" style="left:876.0px;top:107.0px" width="20" height="20" viewBox="0 0 20 20"><path d="M1.500 10c4-6.500 13-6.500 17 0-4 6-13 6-17 0z" fill="#fff" stroke="#e4b8a0" stroke-width="1.300"/><circle cx="10" cy="10" r="3.400" fill="#4a8ad0"/><circle cx="10" cy="10" r="1.500" fill="#123"/></svg>
<svg class="i" style="left:899.0px;top:107.0px" width="20" height="20" viewBox="0 0 20 20"><path d="M7 2.500l4 10M13 2.500l-4 10" stroke="#6a7a9a" stroke-width="1.600"/><circle cx="7" cy="15" r="2.300" fill="none" stroke="#2a5ab0" stroke-width="1.600"/><circle cx="13" cy="15" r="2.300" fill="none" stroke="#2a5ab0" stroke-width="1.600"/></svg>
<svg class="i" style="left:922.0px;top:107.0px" width="20" height="20" viewBox="0 0 20 20"><path d="M3 2.500v13M17 2.500v13M3 7.500h14M3 7.500l2.500-1.500v3zM17 7.500l-2.500-1.500v3z" fill="#1c9ad0" stroke="#1c9ad0" stroke-width="1.100"/><path d="M6 13l2.500 3 6-6" fill="none" stroke="#d8202a" stroke-width="2.200"/></svg>
<svg class="i" style="left:944.0px;top:107.0px" width="20" height="20" viewBox="0 0 20 20"><path d="M3 5l7-2.500 7 2.500-7 2.500zM3 8.500l7 2.500 7-2.500M3 12l7 2.500 3-1" fill="#eef4fc" stroke="#3a5a8a" stroke-width="1"/><path d="M9 14l2.500 3 6-6.500" fill="none" stroke="#d8202a" stroke-width="2.200"/></svg>
<svg class="i" style="left:974.0px;top:107.0px" width="20" height="20" viewBox="0 0 20 20"><circle cx="8.500" cy="8" r="5.800" fill="#fff" stroke="#333" stroke-width="1.500"/><path d="M8.500 4.500v7M5 8h7" stroke="#e01a24" stroke-width="2"/><path d="M12.500 12.500l5 5" stroke="#333" stroke-width="2.400"/></svg>
<svg class="i" style="left:998.0px;top:107.0px" width="20" height="20" viewBox="0 0 20 20"><path d="M6 6l5-3.500 6.500 1v5l-4 1z" fill="#6a9a3a"/><path d="M11 2.500l6.500 1-3 3.500z" fill="#e8c020"/><path d="M5 9l4-4M7 9.500l4-4" stroke="#7a5a3a" stroke-width="1"/><path d="M3 11h12" stroke="#222" stroke-width="1.400"/><path d="M3 14h12" stroke="#e02a2a" stroke-width="2"/><path d="M3 17h12" stroke="#2a4ac8" stroke-width="2"/></svg>
<svg class="i" style="left:1020.0px;top:107.0px" width="20" height="20" viewBox="0 0 20 20"><path d="M8 2.500c1 0 1.500.5 1.500 1.500v4.500l1-.8 1.200.6.800-.5 1.200.7.800-.3 1 1v5l-1.500 3.500h-6.500l-4-5.500c-.5-1 .5-2 1.500-1.200l1.500 1.500v-8.500c0-1 .5-1.500 1.500-1.500z" fill="#f8c86a" stroke="#222" stroke-width="1"/><path d="M9.500 9v3M11.700 9.500v2.500M13.700 10v2" stroke="#222" stroke-width=".8"/></svg>
<svg class="i" style="left:1043.0px;top:107.0px" width="20" height="20" viewBox="0 0 20 20"><rect x="4" y="2" width="12" height="16.500" rx="1.200" fill="#8fa8e0" stroke="#4a5a9a" stroke-width="1"/><rect x="5.500" y="3.500" width="9" height="3" fill="#dce8f8"/><g fill="#f0d8e0"><rect x="5.500" y="8.500" width="2" height="2"/><rect x="9" y="8.500" width="2" height="2"/><rect x="12.500" y="8.500" width="2" height="2"/><rect x="5.500" y="11.800" width="2" height="2"/><rect x="9" y="11.800" width="2" height="2"/><rect x="12.500" y="11.800" width="2" height="2"/><rect x="5.500" y="15" width="2" height="2"/><rect x="9" y="15" width="2" height="2"/><rect x="12.500" y="15" width="2" height="2"/></g></svg>
<svg class="i" style="left:1072.0px;top:107.0px" width="20" height="20" viewBox="0 0 20 20"><circle cx="10.500" cy="10" r="6.800" fill="#eee4f4" stroke="#5a2a9a" stroke-width="1.400"/><path d="M5 5c3 2 4 8 2 11M16 5c-3 3-5 3-11 4" fill="none" stroke="#5a2a9a" stroke-width="1"/><path d="M2 3l5 5M7 8l-.5-3M7 8l-3-.5" stroke="#5a2a9a" stroke-width="1.300" fill="none"/><circle cx="14.500" cy="15" r="3" fill="#e01a3a"/></svg>
<svg class="i" style="left:1094.0px;top:107.0px" width="20" height="20" viewBox="0 0 20 20"><path d="M2.500 7.500c3-1.500 5.500-1 7.500.5 2-1.500 4.500-2 7.500-.5v9c-3-1-5.500-.5-7.500.5-2-1-4.500-1.500-7.500-.5z" fill="#fff" stroke="#222" stroke-width="1.100"/><path d="M10 8v9M4.500 10h3.500M4.500 12.500h3.500M12 10h3.500M12 12.500h3.500" stroke="#444" stroke-width=".8"/><path d="M9.500 5.500l2.500 3 5.500-6.500" fill="none" stroke="#d8202a" stroke-width="2"/></svg>
<svg class="i" style="left:1118.0px;top:107.0px" width="20" height="20" viewBox="0 0 20 20"><circle cx="10" cy="10" r="7.500" fill="url(#gSm)" stroke="#a88a10" stroke-width=".8"/><ellipse cx="7.500" cy="8" rx="1" ry="1.500" fill="#222"/><ellipse cx="12.500" cy="8" rx="1" ry="1.500" fill="#222"/><path d="M5.500 11.500c2 4 7 4 9 0" fill="none" stroke="#222" stroke-width="1.100"/></svg>
<div class="sep" style="left:797px;top:106.5px;width:1px;height:19px;"></div>
<div class="sep" style="left:849px;top:106.5px;width:1px;height:19px;"></div>
<div class="sep" style="left:969px;top:106.5px;width:1px;height:19px;"></div>
<div class="sep" style="left:1067px;top:106.5px;width:1px;height:19px;"></div>
<div class="tb" style="left:1146px;top:102.5px;width:131px;height:26px;"></div>
<div style="left:1147px;top:103.5px;width:9px;height:24px;background:#e7e6e0"></div>
<div class="grip" style="left:1148px;top:103.5px;width:3px;height:23px;"></div>
<div class="grip" style="left:1152px;top:103.5px;width:3px;height:23px;"></div>
<svg class="i" style="left:1158.0px;top:107.0px" width="20" height="20" viewBox="0 0 20 20"><path d="M6.500 4.500v11h8.500" fill="none" stroke="#1a1a9a" stroke-width="1.300"/></svg>
<svg class="i" style="left:1181.0px;top:107.0px" width="20" height="20" viewBox="0 0 20 20"><path d="M6.500 4.500h7M6.500 15.500h7M10 4.500v11" fill="none" stroke="#1a1a9a" stroke-width="1.300"/></svg>
<svg class="i" style="left:1204.0px;top:107.0px" width="20" height="20" viewBox="0 0 20 20"><path d="M13 4.500H8v11h5" fill="none" stroke="#1a1a9a" stroke-width="1.300"/></svg>
<svg class="i" style="left:1228.0px;top:107.0px" width="20" height="20" viewBox="0 0 20 20"><path d="M6.500 5v10.500M13.500 5v10.500M6.500 10.500h7" fill="none" stroke="#1a1a9a" stroke-width="1.300"/></svg>
<svg class="i" style="left:1250.0px;top:107.0px" width="20" height="20" viewBox="0 0 20 20"><circle cx="10" cy="10.500" r="4.300" fill="none" stroke="#1a1a9a" stroke-width="1.300"/></svg>
<div class="tb" style="left:0px;top:130px;width:25px;height:435px;"></div>
<div class="gripH" style="left:3px;top:133px;width:18px;height:3px;"></div>
<div class="gripH" style="left:3px;top:137px;width:18px;height:3px;"></div>
<div class="tb" style="left:26px;top:130px;width:25px;height:390px;"></div>
<div class="gripH" style="left:29px;top:133px;width:18px;height:3px;"></div>
<div class="gripH" style="left:29px;top:137px;width:18px;height:3px;"></div>
<svg class="i" style="left:2.0px;top:142.0px" width="20" height="20" viewBox="0 0 20 20"><path d="M4 16L16 4" stroke="#1a2233" stroke-width="1.700"/><rect x="2.7" y="14.7" width="2.6" height="2.6" fill="#2a6a9a" stroke="#143a5a" stroke-width=".6"/><rect x="14.7" y="2.7" width="2.6" height="2.6" fill="#2a6a9a" stroke="#143a5a" stroke-width=".6"/></svg>
<svg class="i" style="left:2.0px;top:164.0px" width="20" height="20" viewBox="0 0 20 20"><path d="M3 17L17 3M3 17v-3.500M3 17h3.500M17 3v3.500M17 3h-3.500" stroke="#1a2233" stroke-width="1.500" fill="none"/><rect x="6.4" y="11.4" width="2.2" height="2.2" fill="#2a6a9a" stroke="#143a5a" stroke-width=".6"/><rect x="11.4" y="6.4" width="2.2" height="2.2" fill="#2a6a9a" stroke="#143a5a" stroke-width=".6"/></svg>
<svg class="i" style="left:2.0px;top:186.0px" width="20" height="20" viewBox="0 0 20 20"><path d="M3.500 13.500h8.500c5 0 5-7 0-7" fill="none" stroke="#1a2233" stroke-width="1.500"/><rect x="2.2" y="12.2" width="2.6" height="2.6" fill="#2a6a9a" stroke="#143a5a" stroke-width=".6"/><rect x="10.7" y="12.2" width="2.6" height="2.6" fill="#2a6a9a" stroke="#143a5a" stroke-width=".6"/><rect x="10.7" y="5.2" width="2.6" height="2.6" fill="#2a6a9a" stroke="#143a5a" stroke-width=".6"/></svg>
<svg class="i" style="left:2.0px;top:208.0px" width="20" height="20" viewBox="0 0 20 20"><path d="M10 3l7 5-2.700 8h-8.600l-2.700-8z" fill="#eef4fa" stroke="#1a2233" stroke-width="1.600"/></svg>
<svg class="i" style="left:2.0px;top:230.0px" width="20" height="20" viewBox="0 0 20 20"><rect x="3.500" y="6" width="13" height="8.500" fill="#eef4fa" stroke="#1a2233" stroke-width="1.600"/><rect x="2.2" y="13.2" width="2.6" height="2.6" fill="#2a6a9a" stroke="#143a5a" stroke-width=".6"/><rect x="15.2" y="4.7" width="2.6" height="2.6" fill="#2a6a9a" stroke="#143a5a" stroke-width=".6"/></svg>
<svg class="i" style="left:2.0px;top:252.0px" width="20" height="20" viewBox="0 0 20 20"><path d="M4 16.500c0-7 5-12 12-12" fill="none" stroke="#1a2233" stroke-width="1.600"/><rect x="2.7" y="15.2" width="2.6" height="2.6" fill="#2a6a9a" stroke="#143a5a" stroke-width=".6"/><rect x="14.7" y="3.2" width="2.6" height="2.6" fill="#2a6a9a" stroke="#143a5a" stroke-width=".6"/><rect x="6.2" y="6.7" width="2.6" height="2.6" fill="#2a6a9a" stroke="#143a5a" stroke-width=".6"/></svg>
<svg class="i" style="left:2.0px;top:274.0px" width="20" height="20" viewBox="0 0 20 20"><circle cx="10" cy="10" r="7" fill="url(#gLens)" stroke="#1a2233" stroke-width="1.600"/><path d="M10 10l4-4" stroke="#1a2233" stroke-width="1.200"/><rect x="8.8" y="8.8" width="2.4" height="2.4" fill="#2a6a9a" stroke="#143a5a" stroke-width=".6"/></svg>
<svg class="i" style="left:2.0px;top:296.0px" width="20" height="20" viewBox="0 0 20 20"><path d="M6 9c-3-1-3-6 1-5.500 1-3 6-2 6 0 3-1 5 3 2.500 5 2 3-1 6-3.500 4-1 3-5 2-5-.500-4 .500-4-3-1-3z" fill="#eef0f4" stroke="#1a2233" stroke-width="1.500"/></svg>
<svg class="i" style="left:2.0px;top:318.0px" width="20" height="20" viewBox="0 0 20 20"><path d="M3 16c2-9 5-9 7-5s5 2 7-7" fill="none" stroke="#1a2233" stroke-width="1.500"/></svg>
<svg class="i" style="left:2.0px;top:340.0px" width="20" height="20" viewBox="0 0 20 20"><ellipse cx="10" cy="10.500" rx="7" ry="4.500" fill="#eef4fa" stroke="#1c4a7a" stroke-width="1.700"/><rect x="1.7" y="9.2" width="2.6" height="2.6" fill="#2a6a9a" stroke="#143a5a" stroke-width=".6"/><rect x="15.7" y="9.2" width="2.6" height="2.6" fill="#2a6a9a" stroke="#143a5a" stroke-width=".6"/><rect x="8.7" y="4.7" width="2.6" height="2.6" fill="#2a6a9a" stroke="#143a5a" stroke-width=".6"/></svg>
<svg class="i" style="left:2.0px;top:362.0px" width="20" height="20" viewBox="0 0 20 20"><path d="M8 14.500c-7-1-6-8 2-8.500 8 0 9 6 3 8" fill="none" stroke="#1a2233" stroke-width="1.600"/><rect x="2.2" y="9.2" width="2.6" height="2.6" fill="#2a6a9a" stroke="#143a5a" stroke-width=".6"/><rect x="7.7" y="13.7" width="2.6" height="2.6" fill="#2a6a9a" stroke="#143a5a" stroke-width=".6"/><rect x="11.7" y="12.7" width="2.6" height="2.6" fill="#2a6a9a" stroke="#143a5a" stroke-width=".6"/></svg>
<svg class="i" style="left:2.0px;top:384.0px" width="20" height="20" viewBox="0 0 20 20"><path d="M6 2.500h8l3 3v9h-11z" fill="#e4ecf6" stroke="#5a7a9a" stroke-width=".9"/><rect x="4" y="7.500" width="8" height="6" fill="#c4dc9a" stroke="#3a6a2a" stroke-width="1.100"/><circle cx="11" cy="14" r="3.300" fill="#e4ecc4" stroke="#3a5a2a" stroke-width="1.200"/><rect x="2.2" y="11.2" width="2.6" height="2.6" fill="#2a6a9a" stroke="#143a5a" stroke-width=".6"/><path d="M18.500 15v3.500h-3.500z" fill="#000"/></svg>
<svg class="i" style="left:2.0px;top:406.0px" width="20" height="20" viewBox="0 0 20 20"><rect x="5" y="4.500" width="8" height="6" fill="#c4dc9a" stroke="#3a6a2a" stroke-width="1.100"/><circle cx="12.500" cy="13" r="3.800" fill="#e4ecc4" stroke="#3a5a2a" stroke-width="1.200"/><rect x="2.7" y="9.2" width="2.6" height="2.6" fill="#2a6a9a" stroke="#143a5a" stroke-width=".6"/></svg>
<svg class="i" style="left:2.0px;top:428.0px" width="20" height="20" viewBox="0 0 20 20"><rect x="8.800" y="8.800" width="2.600" height="2.600" fill="#1a2233"/></svg>
<svg class="i" style="left:2.0px;top:450.0px" width="20" height="20" viewBox="0 0 20 20"><rect x="5" y="5" width="10" height="10" fill="#eef4fa"/><path d="M5 9l4-4M5 13l8-8M7 15l8-8M11 15l4-4" stroke="#2a5a9a" stroke-width="1.100"/><path d="M2.500 5h15M2.500 15h15M5 2.500v15M15 2.500v15" stroke="#2a5a9a" stroke-width="1.500"/></svg>
<svg class="i" style="left:2.0px;top:472.0px" width="20" height="20" viewBox="0 0 20 20"><rect x="5" y="5" width="10" height="10" fill="#3a3a3a"/><path d="M5 15l10-10v10z" fill="#8a8a7a"/><path d="M2.500 5h15M2.500 15h15M5 2.500v15M15 2.500v15" stroke="#111" stroke-width="1.600"/></svg>
<svg class="i" style="left:2.0px;top:494.0px" width="20" height="20" viewBox="0 0 20 20"><path d="M3 4.500h9.500l4.500 4.500v7h-14z" fill="#d4e4f4" stroke="#1c4a7a" stroke-width="1.500"/><circle cx="10" cy="11" r="3" fill="#e8e8e8" stroke="#5a6a7a" stroke-width="1.200"/></svg>
<svg class="i" style="left:2.0px;top:516.0px" width="20" height="20" viewBox="0 0 20 20"><rect x="3" y="3.500" width="14" height="13" fill="#fff" stroke="#3a5ab0" stroke-width="1"/><rect x="3" y="3.500" width="14" height="3.500" fill="#3a5ab0"/><path d="M3 10.200h14M3 13.400h14M7.700 7v9.500M12.400 7v9.500" stroke="#3a5ab0" stroke-width="1.300"/></svg>
<svg class="i" style="left:2.0px;top:538.0px" width="20" height="20" viewBox="0 0 20 20"><text x="10" y="17.500" text-anchor="middle" font-family="Liberation Sans,sans-serif" font-size="19" fill="#111">A</text></svg>
<svg class="i" style="left:28.0px;top:142.0px" width="20" height="20" viewBox="0 0 20 20"><path d="M2.500 16.500h14" stroke="#b02a2a" stroke-width="1.100"/><path d="M16 3l2 2-8 9-3-2.500z" fill="#f0d040" stroke="#8a6a10" stroke-width=".7"/><path d="M9.500 9.500l2.500 2.500-3 3.500-3.500-.500-.500-2z" fill="#e88a7a" stroke="#8a3a2a" stroke-width=".7"/></svg>
<svg class="i" style="left:28.0px;top:164.0px" width="20" height="20" viewBox="0 0 20 20"><circle cx="6" cy="6" r="3" fill="none" stroke="#1a2233" stroke-width="1.500"/><circle cx="11.500" cy="13.500" r="3.500" fill="#dce4ec" stroke="#1a2233" stroke-width="1.500"/><circle cx="14" cy="11" r="3" fill="none" stroke="#1a2233" stroke-width="1.300"/><path d="M9.500 4c3-1 5 0 5.500 3M13.500 7.500l2 .500 1-2" fill="none" stroke="#1a2233" stroke-width="1.300"/></svg>
<svg class="i" style="left:28.0px;top:186.0px" width="20" height="20" viewBox="0 0 20 20"><path d="M10 2v16" stroke="#1a2233" stroke-width="1"/><path d="M8 4.500v11h-5.500z" fill="#eef4fa" stroke="#1a2233" stroke-width="1.400"/><path d="M12 4.500v11h5.500z" fill="#c4d8ec" stroke="#1a2233" stroke-width="1.400"/></svg>
<svg class="i" style="left:28.0px;top:208.0px" width="20" height="20" viewBox="0 0 20 20"><path d="M3 16.500v-4h4.500v-4c0-5 6-5 6 0v4h4v4z" fill="#eef4fa" stroke="#1a2233" stroke-width="1.400"/><path d="M5 14.500h4.500v-6c0-2.500 2-2.500 2 0v6h4" fill="none" stroke="#2a6a9a" stroke-width="1.200"/></svg>
<svg class="i" style="left:28.0px;top:230.0px" width="20" height="20" viewBox="0 0 20 20"><g fill="#fff" stroke="#1a2233" stroke-width="1.500"><rect x="3" y="3" width="5.500" height="5.500"/><rect x="11.500" y="3" width="5.500" height="5.500"/><rect x="3" y="11.500" width="5.500" height="5.500"/><rect x="11.500" y="11.500" width="5.500" height="5.500"/></g></svg>
<svg class="i" style="left:28.0px;top:252.0px" width="20" height="20" viewBox="0 0 20 20"><path d="M10 1.500l3 3.500h-2v4h4v-2l3.500 3-3.500 3v-2h-4v4h2l-3 3.500-3-3.500h2v-4h-4v2l-3.500-3 3.500-3v2h4v-4h-2z" fill="#2a5a8a" stroke="#143a5a" stroke-width=".5"/></svg>
<svg class="i" style="left:28.0px;top:274.0px" width="20" height="20" viewBox="0 0 20 20"><path d="M6.500 4.500c-5 3.500-3.500 12 3.500 12s9-8 4-12" fill="none" stroke="#2a5a8a" stroke-width="2.200"/><path d="M3 3l5.500-.500-.500 5.500z" fill="#2a5a8a"/></svg>
<svg class="i" style="left:28.0px;top:296.0px" width="20" height="20" viewBox="0 0 20 20"><rect x="3.500" y="3.500" width="13" height="13" fill="#d4e4f4" stroke="#1a2233" stroke-width="1.300"/><rect x="3.500" y="9" width="7.500" height="7.500" fill="#fff" stroke="#1a2233" stroke-width="1.200" stroke-dasharray="1.200 1.200"/></svg>
<svg class="i" style="left:28.0px;top:318.0px" width="20" height="20" viewBox="0 0 20 20"><path d="M3.500 3.500h6l6.500 13h-12.500z" fill="#fff" stroke="#1a2233" stroke-width="1.500"/><path d="M9.500 3.500l6.500 13h-6.500z" fill="#b8d0e8"/><path d="M8.500 4v12.500" stroke="#1a2233" stroke-width="1" stroke-dasharray="1.200 1.200"/></svg>
<svg class="i" style="left:28.0px;top:340.0px" width="20" height="20" viewBox="0 0 20 20"><path d="M2 10.500h7" stroke="#1a2233" stroke-width="1.400"/><path d="M11 10.500h7" stroke="#1a2233" stroke-width="1.200" stroke-dasharray="1.500 1.200"/><path d="M7 16.500L13 4" stroke="#2a6a9a" stroke-width="1.300"/></svg>
<svg class="i" style="left:28.0px;top:362.0px" width="20" height="20" viewBox="0 0 20 20"><path d="M2 10.500h9" stroke="#1a2233" stroke-width="1.300" stroke-dasharray="2.500 1.500"/><path d="M11 16.500L17 4" stroke="#2a6a9a" stroke-width="1.500"/></svg>
<svg class="i" style="left:28.0px;top:384.0px" width="20" height="20" viewBox="0 0 20 20"><rect x="3" y="5.500" width="14" height="10" fill="#e4ecf6" stroke="#1a2233" stroke-width="1.500"/><rect x="10.5" y="4.0" width="3" height="3" fill="#2a6a9a" stroke="#143a5a" stroke-width=".6"/></svg>
<svg class="i" style="left:28.0px;top:406.0px" width="20" height="20" viewBox="0 0 20 20"><path d="M7.500 5.500H3v10h14v-10h-4.500" fill="#e4ecf6" stroke="#1a2233" stroke-width="1.500"/><rect x="6.0" y="4.0" width="3" height="3" fill="#2a6a9a" stroke="#143a5a" stroke-width=".6"/><rect x="11.0" y="4.0" width="3" height="3" fill="#2a6a9a" stroke="#143a5a" stroke-width=".6"/></svg>
<svg class="i" style="left:28.0px;top:428.0px" width="20" height="20" viewBox="0 0 20 20"><path d="M2 10h16" stroke="#1a2233" stroke-width="1.500"/><path d="M6.500 7l3 3-3 3zM13.500 7l-3 3 3 3z" fill="#1a2233"/></svg>
<svg class="i" style="left:28.0px;top:450.0px" width="20" height="20" viewBox="0 0 20 20"><path d="M4 17V9.500L10.500 3.500H17" fill="none" stroke="#1a2233" stroke-width="1.600"/><path d="M4 9V3.500h6" fill="none" stroke="#1a2233" stroke-width="1" stroke-dasharray="1.200 1.200"/></svg>
<svg class="i" style="left:28.0px;top:472.0px" width="20" height="20" viewBox="0 0 20 20"><path d="M4 17V11c0-5 3-7.500 13-7.500" fill="none" stroke="#1a2233" stroke-width="1.600"/><path d="M5.500 10c.500-3 2.500-5 6-5.500" fill="none" stroke="#5a9ad0" stroke-width="1.300"/><path d="M4 9V3.500h6" fill="none" stroke="#1a2233" stroke-width="1" stroke-dasharray="1.200 1.200"/></svg>
<svg class="i" style="left:28.0px;top:494.0px" width="20" height="20" viewBox="0 0 20 20"><path d="M4 15l5-9 3 3z" fill="#c85a1a"/><path d="M3 12l3-1 1 3zM6 7l2 2-3 1zM8 14l3 1-2 2zM10 11l2-1 1 2z" fill="#e07a2a" stroke="#9a3a0a" stroke-width=".5"/><path d="M12 8l4.500-4.500" stroke="#c8a060" stroke-width="1.600"/><path d="M15 2l.500 1.500 1.500.500-1.500.500-.500 1.500-.500-1.500-1.500-.500 1.500-.500z" fill="#9ac0e8"/></svg>
<div class="tb" style="left:0px;top:566px;width:25px;height:83px;"></div>
<div class="gripH" style="left:3px;top:569px;width:18px;height:3px;"></div>
<div class="gripH" style="left:3px;top:573px;width:18px;height:3px;"></div>
<svg class="i" style="left:2.0px;top:578.0px" width="20" height="20" viewBox="0 0 20 20"><text x="8.500" y="14.500" text-anchor="middle" font-family="Liberation Sans,sans-serif" font-size="16" fill="#111">A</text><g transform="translate(1 3)"><path d="M17 5l-6 7" stroke="#c08040" stroke-width="1.800"/><path d="M11.500 10.500l1.500 1.500-4 3.500-3.500.500 2.500-2z" fill="#222"/></g></svg>
<svg class="i" style="left:2.0px;top:601.0px" width="20" height="20" viewBox="0 0 20 20"><g transform="translate(0 -2)"><path d="M17 5l-6 7" stroke="#c08040" stroke-width="1.800"/><path d="M11.500 10.500l1.500 1.500-4 3.500-3.500.500 2.500-2z" fill="#222"/></g><path d="M2.500 12.500v5M17.500 12.500v5M2.500 15h15M2.500 15l2.500-1.500v3zM17.500 15l-2.500-1.500v3z" fill="#111" stroke="#111" stroke-width="1.200"/></svg>
<svg class="i" style="left:2.0px;top:622.0px" width="20" height="20" viewBox="0 0 20 20"><rect x="2.500" y="6" width="13.500" height="11" fill="#4a6ac0"/><path d="M2.500 10h13.500M2.500 13.500h13.500M7 10v7M11.500 10v7" stroke="#fff" stroke-width="1.200"/><g transform="translate(1 -2)"><path d="M17 5l-6 7" stroke="#c08040" stroke-width="1.800"/><path d="M11.500 10.500l1.500 1.500-4 3.500-3.500.500 2.500-2z" fill="#222"/></g></svg>
<div class="tb" style="left:1254px;top:130px;width:26px;height:442px;"></div>
<div class="gripH" style="left:1257px;top:133px;width:19px;height:3px;"></div>
<div class="gripH" style="left:1257px;top:137px;width:19px;height:3px;"></div>
<svg class="i" style="left:1257.0px;top:142.0px" width="20" height="20" viewBox="0 0 20 20"><path d="M3.500 3v14M16.500 3v14M3.500 6.500h13" stroke="#111" stroke-width="1.500" fill="none"/><path d="M3.500 6.500l3-1.700v3.400zM16.500 6.500l-3-1.700v3.400z" fill="#111"/></svg>
<svg class="i" style="left:1257.0px;top:164.0px" width="20" height="20" viewBox="0 0 20 20"><path d="M3 6l4-3.500M13 17.500l4-3.500M5 4.500l10 11" stroke="#111" stroke-width="1.500" fill="none"/><path d="M5 4.500l3.300 1.200-2.300 2.100zM15 15.500l-3.300-1.200 2.300-2.100z" fill="#111"/></svg>
<svg class="i" style="left:1257.0px;top:186.0px" width="20" height="20" viewBox="0 0 20 20"><path d="M3 16.500c0-7 5-12 13-12.500" fill="none" stroke="#2a2a3a" stroke-width="1.500"/><path d="M8 16.500c0-4 3-7 8-7.500" fill="none" stroke="#111" stroke-width="1.300"/><path d="M8 17l-1.200-3h2.600zM16.500 9l-3 .2 1.200 2.300z" fill="#111"/><rect x="1.5" y="15.0" width="3" height="3" fill="#2a6a9a" stroke="#143a5a" stroke-width=".6"/><rect x="14.5" y="2.5" width="3" height="3" fill="#2a6a9a" stroke="#143a5a" stroke-width=".6"/></svg>
<svg class="i" style="left:1257.0px;top:209.0px" width="20" height="20" viewBox="0 0 20 20"><path d="M6 16.500h11M8.500 7v9.500M13.500 10v6.500M8.500 12h5l3-3.500M11 12l3 3" fill="none" stroke="#111" stroke-width="1.200"/><text x="2" y="8.500" font-family="Liberation Sans,sans-serif" font-size="5.500" font-weight="bold" fill="#111">Y</text><circle cx="7.500" cy="3.500" r="1.200" fill="none" stroke="#111" stroke-width=".8"/><circle cx="3.500" cy="15.500" r="1.200" fill="none" stroke="#111" stroke-width=".8"/><path d="M14.500 2l2.500 3M17 2l-2.500 3" stroke="#111" stroke-width=".8"/></svg>
<svg class="i" style="left:1257.0px;top:236.0px" width="20" height="20" viewBox="0 0 20 20"><circle cx="10" cy="10" r="7" fill="#f4f0e4" stroke="#333" stroke-width="1.300"/><path d="M12.500 12.500L6 6" stroke="#111" stroke-width="1.300"/><path d="M5 5l4 1.200-2.800 2.800z" fill="#111"/></svg>
<svg class="i" style="left:1257.0px;top:258.0px" width="20" height="20" viewBox="0 0 20 20"><path d="M5 6c4-4 11-1 10 6" fill="none" stroke="#444" stroke-width="1.300"/><path d="M4 17l4.500-4.500-1.500-1.500 6-5.500" fill="none" stroke="#111" stroke-width="1.500"/><path d="M14 4.500l-1.200 4-2.800-2.800z" fill="#111"/></svg>
<svg class="i" style="left:1257.0px;top:280.0px" width="20" height="20" viewBox="0 0 20 20"><circle cx="10" cy="10" r="7" fill="#f4f0e4" stroke="#333" stroke-width="1.300"/><path d="M5.500 5.500l9 9" stroke="#111" stroke-width="1.300"/><path d="M4.800 4.800l4 1.200-2.800 2.800zM15.200 15.200l-4-1.200 2.800-2.800z" fill="#111"/></svg>
<svg class="i" style="left:1257.0px;top:302.0px" width="20" height="20" viewBox="0 0 20 20"><path d="M3 16.500h14M3 16.500L11 3" fill="none" stroke="#111" stroke-width="1.400"/><path d="M10.500 5.500c3.500 2 5 6 5 9.500" fill="none" stroke="#111" stroke-width="1.100"/><path d="M9.500 5l3.500.800-2 2.500zM15.500 16l-1.700-3h3.200z" fill="#111"/></svg>
<svg class="i" style="left:1257.0px;top:329.0px" width="20" height="20" viewBox="0 0 20 20"><path d="M4 3v14M16 3v14M4 6h12M4 15.500h12" stroke="#111" stroke-width="1.400" fill="none"/><path d="M4 6l3-1.500v3zM16 6l-3-1.500v3z" fill="#111"/><path d="M8 3l6 5-2 1.500 4.500 6-7.500-5 2-1.500z" fill="#f0e020" stroke="#8a7a10" stroke-width=".6"/></svg>
<svg class="i" style="left:1257.0px;top:351.0px" width="20" height="20" viewBox="0 0 20 20"><path d="M4 2.500v15M12 9v8.500M16 2.500v7M4 5h12M4 13h8" stroke="#111" stroke-width="1.300" fill="none"/><path d="M4 5l2.500-1.300v2.600zM16 5l-2.500-1.300v2.600zM4 13l2.500-1.300v2.600zM12 13l-2.500-1.300v2.600z" fill="#111"/></svg>
<svg class="i" style="left:1257.0px;top:374.0px" width="20" height="20" viewBox="0 0 20 20"><path d="M3.500 2.500v15M10 2.500v15M16.500 2.500v15M3.500 7h13M3.500 13h13" stroke="#111" stroke-width="1.300" fill="none"/><path d="M3.500 7l2.300-1.200v2.400zM10 7l-2.300-1.200v2.400zM10 7l2.300-1.200v2.400zM16.500 7l-2.300-1.200v2.400z" fill="#111"/></svg>
<svg class="i" style="left:1257.0px;top:403.0px" width="20" height="20" viewBox="0 0 20 20"><path d="M2.500 8.500l5-3M2.500 8.500l3.500-.2-1.500-2.500z" stroke="#111" stroke-width="1.300" fill="#111"/><path d="M7 4l7 4.500-1.500 1.500 4 7-8-6 2-1.500-5-3z" fill="#f0e020" stroke="#6a5a10" stroke-width=".7"/><text x="13.500" y="7" font-family="Liberation Sans,sans-serif" font-size="7" font-weight="bold" fill="#1a3a8a">A</text></svg>
<svg class="i" style="left:1257.0px;top:424.0px" width="20" height="20" viewBox="0 0 20 20"><rect x="2.500" y="5" width="15.500" height="9.500" fill="#dce8f8" stroke="#2a5ab0" stroke-width="1.200"/><path d="M10 5v9.500" stroke="#2a5ab0" stroke-width="1.200"/><circle cx="6.200" cy="9.700" r="2" fill="none" stroke="#1a3a8a" stroke-width="1"/><path d="M6.200 6.500v6.500M3.500 9.700h5.500" stroke="#1a3a8a" stroke-width=".8"/><text x="11.300" y="13" font-family="Liberation Sans,sans-serif" font-size="7.500" font-weight="bold" fill="#1a3a8a">.1</text></svg>
<svg class="i" style="left:1257.0px;top:446.0px" width="20" height="20" viewBox="0 0 20 20"><circle cx="10" cy="10" r="7" fill="#f8f6ee" stroke="#333" stroke-width="1.300"/><path d="M10 7.500v5M7.500 10h5" stroke="#111" stroke-width="1.700"/></svg>
<svg class="i" style="left:1257.0px;top:473.0px" width="20" height="20" viewBox="0 0 20 20"><path d="M3 11.500v6M17 11.500v6M3 14.500h14" stroke="#111" stroke-width="1.400" fill="none"/><path d="M3 14.500l3-1.500v3zM17 14.500l-3-1.500v3z" fill="#111"/><text x="10" y="10.500" text-anchor="middle" font-family="Liberation Sans,sans-serif" font-size="11" font-weight="bold" fill="#1a3a8a">A</text></svg>
<svg class="i" style="left:1257.0px;top:495.0px" width="20" height="20" viewBox="0 0 20 20"><path d="M3 11.500v6M17 11.500v6M3 14.500h14" stroke="#111" stroke-width="1.400" fill="none"/><path d="M3 14.500l3-1.500v3zM17 14.500l-3-1.500v3z" fill="#111"/><path d="M15.500 2l1.500 1.500-6.500 8-2.500 1 .800-2.500z" fill="#f0c020" stroke="#8a5a10" stroke-width=".7"/></svg>
<svg class="i" style="left:1257.0px;top:518.0px" width="20" height="20" viewBox="0 0 20 20"><path d="M3 5v12M15 5v12M3 8h12M3 14h12M17 3v8M5 4h12" stroke="#111" stroke-width="1.300" fill="none"/><path d="M5 4h12M17 3v7" stroke="#2a5a9a" stroke-width="1.200" fill="none"/><path d="M3 8l2.500-1.300v2.600zM15 8l-2.500-1.300v2.600zM3 14l2.500-1.300v2.600zM15 14l-2.500-1.300v2.600z" fill="#111"/></svg>
<svg class="i" style="left:1257.0px;top:546.0px" width="20" height="20" viewBox="0 0 20 20"><path d="M3 11.500v6M17 11.500v6M3 14.500h14" stroke="#111" stroke-width="1.400" fill="none"/><path d="M3 14.500l3-1.500v3zM17 14.500l-3-1.500v3z" fill="#111"/><path d="M17 3l-6.500 7" stroke="#c08040" stroke-width="1.800"/><path d="M11 8.500l1.500 1.500-4 3-3.500.500 2.500-2z" fill="#222"/></svg>
<div class="sepH" style="left:1257px;top:231px;width:20px;height:1px;"></div>
<div class="sepH" style="left:1257px;top:324px;width:20px;height:1px;"></div>
<div class="sepH" style="left:1257px;top:398px;width:20px;height:1px;"></div>
<div class="sepH" style="left:1257px;top:468px;width:20px;height:1px;"></div>
<div class="sepH" style="left:1257px;top:541px;width:20px;height:1px;"></div>
<div class="tb" style="left:1254px;top:573px;width:26px;height:103px;"></div>
<div class="gripH" style="left:1257px;top:576px;width:19px;height:3px;"></div>
<div class="gripH" style="left:1257px;top:580px;width:19px;height:3px;"></div>
<svg class="i" style="left:1257.0px;top:586.0px" width="20" height="20" viewBox="0 0 20 20"><rect x="3" y="3" width="8" height="8" fill="url(#gB)" stroke="#3f6a94" stroke-width="1"/><rect x="10" y="10" width="7.500" height="7.500" fill="url(#gB)" stroke="#3f6a94" stroke-width="1"/><rect x="6" y="6" width="9" height="9" fill="#3f6fb0" stroke="#1c3f7a" stroke-width="1"/></svg>
<svg class="i" style="left:1257.0px;top:607.0px" width="20" height="20" viewBox="0 0 20 20"><rect x="6" y="6" width="9" height="9" fill="#3f6fb0" stroke="#1c3f7a" stroke-width="1"/><rect x="3" y="3" width="8" height="8" fill="url(#gB)" stroke="#3f6a94" stroke-width="1"/><rect x="10" y="10" width="7.500" height="7.500" fill="url(#gB)" stroke="#3f6a94" stroke-width="1"/></svg>
<svg class="i" style="left:1257.0px;top:629.0px" width="20" height="20" viewBox="0 0 20 20"><rect x="7" y="7.500" width="10.500" height="9.500" fill="url(#gB)" stroke="#3f6a94" stroke-width="1"/><rect x="3" y="3" width="11" height="10" fill="#3f6fb0" stroke="#1c3f7a" stroke-width="1"/></svg>
<svg class="i" style="left:1257.0px;top:651.0px" width="20" height="20" viewBox="0 0 20 20"><rect x="3" y="3" width="11" height="10" fill="#3f6fb0" stroke="#1c3f7a" stroke-width="1"/><rect x="7" y="7.500" width="10.500" height="9.500" fill="url(#gB)" stroke="#3f6a94" stroke-width="1"/></svg>
<svg class="i" style="left:53px;top:132px" width="1182" height="529" viewBox="53 132 1182 529"><circle cx="263.200" cy="436.200" r="116.700" fill="none" stroke="#f4f4f4" stroke-width="1.100"/><g fill="none" stroke="#fff" stroke-width="1"><rect x="64.5" y="638.5" width="10" height="10"/><path d="M69.5 638V593.5M66 593.5L69.5 580.5L73 593.5ZM69.5 593.5V585"/><path d="M75 643.5H119M119 640L132 643.5L119 647ZM119 643.5H128"/><path d="M66 560l4.5 6.5L75 560M70.5 566.500V573"/><path d="M141 637l10 12M151 637l-10 12"/></g></svg>
<div class="dd" style="left:1236px;top:132px;width:16px;height:17px;"></div>
<svg class="i" style="left:1236px;top:132px" width="16" height="17"><path d="M4.5 10.5l3.5 -3.5l3.5 3.5" fill="none" stroke="#444" stroke-width="2"/></svg>
<div class="dd" style="left:1236px;top:150px;width:16px;height:15px;"></div>
<div style="left:1240px;top:153px;width:8px;height:1px;background:#888"></div>
<div style="left:1240px;top:155px;width:8px;height:1px;background:#888"></div>
<div style="left:1240px;top:157px;width:8px;height:1px;background:#888"></div>
<div style="left:1240px;top:159px;width:8px;height:1px;background:#888"></div>
<div class="dd" style="left:1236px;top:643px;width:16px;height:17px;"></div>
<svg class="i" style="left:1236px;top:643px" width="16" height="17"><path d="M4.5 6.5l3.5 3.5l3.5 -3.5" fill="none" stroke="#444" stroke-width="2"/></svg>
<div style="left:53px;top:660px;width:1199px;height:1px;background:#fff"></div>
<div style="left:55.0px;top:662px;width:17.5px;height:14px;border:1px solid;border-color:#fff #8a8a8a #8a8a8a #fff;background:#ececec"></div>
<svg class="i" style="left:55.0px;top:663px" width="18" height="12"><path d="M5 2v8M11 2L6.5 6 11 10z" fill="#000" stroke="#000" stroke-width="1"/></svg>
<div style="left:72.5px;top:662px;width:17.5px;height:14px;border:1px solid;border-color:#fff #8a8a8a #8a8a8a #fff;background:#ececec"></div>
<svg class="i" style="left:72.5px;top:663px" width="18" height="12"><path d="M11 2L5.5 6 11 10z" fill="#000" stroke="#000" stroke-width="1"/></svg>
<div style="left:90.0px;top:662px;width:17.5px;height:14px;border:1px solid;border-color:#fff #8a8a8a #8a8a8a #fff;background:#ececec"></div>
<svg class="i" style="left:90.0px;top:663px" width="18" height="12"><path d="M6 2l5.500 4L6 10z" fill="#000" stroke="#000" stroke-width="1"/></svg>
<div style="left:107.5px;top:662px;width:17.5px;height:14px;border:1px solid;border-color:#fff #8a8a8a #8a8a8a #fff;background:#ececec"></div>
<svg class="i" style="left:107.5px;top:663px" width="18" height="12"><path d="M12 2v8M6 2l4.500 4L6 10z" fill="#000" stroke="#000" stroke-width="1"/></svg>
<svg class="i" style="left:128px;top:660px" width="130" height="16"><path d="M3 0H40L34 14H9Z" fill="#000" stroke="#000"/><path d="M40 0L46 0M45 1L40 14H76L82 0" fill="#fff" stroke="#000"/><path d="M82 0L86 1L82 14H118L124 0" fill="#fff" stroke="#000"/></svg>
<div class="t" style="left:137px;top:660px;font-size:12px;line-height:14px;color:#fff">模型</div>
<div class="t" style="left:173px;top:660px;font-size:12px;line-height:14px;color:#000">布局1</div>
<div class="t" style="left:215px;top:660px;font-size:12px;line-height:14px;color:#000">布局2</div>
<div style="left:833px;top:661px;width:402px;height:14px;background:linear-gradient(#fff,#f2f2f2)"></div>
<div style="left:833px;top:661px;width:6px;height:13px;background:#fdfdfa;border:1px solid #f4f4f4;border-right-color:#aaa"></div>
<div class="dd" style="left:839px;top:661px;width:17px;height:13px;"></div>
<svg class="i" style="left:839px;top:661px" width="17" height="13"><path d="M10.5 3.0l-3.5 3.5l3.5 3.5" fill="none" stroke="#444" stroke-width="2"/></svg>
<div class="dd" style="left:1201px;top:661px;width:16px;height:13px;"></div>
<div style="left:1205px;top:665px;width:1px;height:5px;background:#888"></div>
<div style="left:1207px;top:665px;width:1px;height:5px;background:#888"></div>
<div style="left:1209px;top:665px;width:1px;height:5px;background:#888"></div>
<div style="left:1211px;top:665px;width:1px;height:5px;background:#888"></div>
<div class="dd" style="left:1218px;top:661px;width:17px;height:13px;"></div>
<svg class="i" style="left:1218px;top:661px" width="17" height="13"><path d="M6.5 3.0l3.5 3.5l-3.5 3.5" fill="none" stroke="#444" stroke-width="2"/></svg>
<div style="left:6px;top:690px;width:3px;height:19px;background:#fff;border-right:1px solid #b4b4b4"></div>
<div style="left:10px;top:690px;width:3px;height:19px;background:#fff;border-right:1px solid #b4b4b4"></div>
<div class="tw" style="left:20px;top:699px;"><span class="c">命令</span>:</div>
<div style="left:3px;top:719px;width:252px;height:19px;border:1px solid;border-color:#8a8a8a #fff #fff #8a8a8a;background:#f0f0f0"></div>
<div class="t" style="left:7px;top:721px;font-size:12px;line-height:15px;word-spacing:2px">506.5073,&nbsp;&nbsp; 863.8881 , 0.0000</div>
<div class="sb up" style="left:259px;width:29px;">捕捉</div>
<div class="sb up" style="left:291px;width:30px;">栅格</div>
<div class="sb up" style="left:323px;width:30px;">正交</div>
<div class="sb dn" style="left:355px;width:30px;">极轴</div>
<div class="sb dn" style="left:387px;width:54px;">对象捕捉</div>
<div class="sb dn" style="left:443px;width:54px;">对象追踪</div>
<div class="sb up" style="left:499px;width:24px;font-family:'Liberation Mono',monospace;font-size:10px;font-weight:bold;">DYN</div>
<div class="sb up" style="left:524px;width:30px;">线宽</div>
<div class="sb dn" style="left:556px;width:30px;">模型</div>
<div style="left:1221px;top:719px;width:43px;height:18px;background:#e6e6e6;border-top:1px solid #cfcfcf"></div>
<svg class="i" style="left:1222.0px;top:718.0px" width="20" height="20" viewBox="0 0 20 20"><path d="M5 4c-1 5 3 9 8 8z" fill="#c8d8f0" stroke="#3a5a9a" stroke-width="1"/><path d="M5 4l8 8M8 9l4-5" stroke="#3a5a9a" stroke-width=".9"/><circle cx="12.500" cy="3.500" r="1.200" fill="#e03020"/><path d="M9 12v4M5.500 17h7" stroke="#5a7ab0" stroke-width="1.600"/></svg>
<svg class="i" style="left:1242.0px;top:718.0px" width="20" height="20" viewBox="0 0 20 20"><path d="M11 9V6c0-3.500 5.500-3.500 5.500 0v1.500" fill="none" stroke="#d8b820" stroke-width="1.700"/><rect x="3.500" y="8.500" width="10" height="8.500" rx="1" fill="#c8a818" stroke="#7a6a08" stroke-width=".8"/><path d="M3.500 11.500h10M3.500 14h10" stroke="#7a6a08" stroke-width=".7"/></svg>
<svg class="i" style="left:1270px;top:730px" width="7" height="4"><path d="M0 0h7L3.500 4z" fill="#000"/></svg>
<svg class="i" style="left:3.0px;top:737.0px" width="30" height="30" viewBox="0 0 20 20"><path d="M2.500 2l4.500 2.500 3-1.500 3 1.500 4.500-2.500-1 8-2.500 6-4 2.500-4-2.500-2.500-6z" fill="url(#gTF)" stroke="#b4b4ba" stroke-width=".5"/><path d="M5 5.500l3.500 2v3l-2.500-1zM15 5.500l-3.500 2v3l2.500-1z" fill="#222226"/><path d="M8.700 4.500h2.600v7h-2.600zM7 12.500l1.500 4h3l1.500-4-1.500 1h-3z" fill="#4a4a50"/><path d="M9.400 5v11M10.600 5v11" stroke="#a0a0a8" stroke-width=".5"/><path d="M3 3l4 2.200M17 3l-4 2.200" stroke="#d0d0d4" stroke-width=".6"/></svg>
<div class="t" style="left:37px;top:749px;color:#f0f0f0;font-weight:bold;font-style:italic;font-size:7px;line-height:8px;letter-spacing:.9px;transform:scaleX(1.5);transform-origin:0 0">PROTECT</div>
<svg class="i" style="left:106.0px;top:743.0px" width="20" height="20" viewBox="0 0 20 20"><path d="M10 2l2 2.500h-4z" fill="#e8e8f8"/><rect x="6.500" y="4" width="7" height="5" fill="#2a4ac8" stroke="#c8d0f8" stroke-width=".6"/><rect x="7" y="9" width="6" height="7.500" fill="#e8e8f0" stroke="#8a90b0" stroke-width=".6"/><rect x="3" y="7" width="3.500" height="8" fill="#2a4ac8"/><rect x="13.500" y="7" width="3.500" height="8" fill="#2a4ac8"/><path d="M8.500 6h3" stroke="#fff" stroke-width="1"/><rect x="8.500" y="10.500" width="3" height="3" fill="#c82a2a" opacity=".7"/></svg>
<svg class="i" style="left:130.0px;top:743.0px" width="20" height="20" viewBox="0 0 20 20"><circle cx="10" cy="10" r="7.300" fill="#2a7ad0"/><path d="M6 5c2-1 4 0 5 1.500s-1 3-2.500 3-3 1.500-2 3.500-2 1-3-1 .5-6 2.500-7zM13 11c1.500-.5 3 .5 3 1.500s-1.500 3-3 3-1.500-4 0-4.500z" fill="#3ab04a"/><path d="M5 6c2-2.500 6-3 8-1.500" stroke="#bfe0ff" stroke-width="1.200" fill="none" opacity=".8"/></svg>
<svg class="i" style="left:153.0px;top:743.0px" width="20" height="20" viewBox="0 0 20 20"><circle cx="10" cy="10.500" r="6" fill="#3a9ae8"/><circle cx="10" cy="10.500" r="3.200" fill="#0d0d0d"/><rect x="9" y="9.500" width="8" height="2" fill="#3a9ae8"/><rect x="12" y="11.500" width="6" height="3" fill="#0d0d0d"/><path d="M13 13.500c1 0 2.500 0 3.500-.5-1 2-3 3.500-5 3.500z" fill="#3a9ae8"/><path d="M2.500 17c-2-3 3-11 9-13.500 3-1.500 6-1 5.500 2" fill="none" stroke="#f0c030" stroke-width="1.600"/></svg>
<div class="t" style="left:182px;top:740px;color:#fff;font-weight:bold;font-size:12px;line-height:12px;letter-spacing:-1px">»</div>
<div class="tk" style="left:200px;width:156px;"><span style="position:absolute;left:27px;top:0"><span class="c">面积与周长</span> - <span class="c">『</span>Aut...</span></div>
<svg class="i" style="left:206.0px;top:743.0px" width="20" height="20" viewBox="0 0 20 20"><circle cx="10" cy="10.500" r="6" fill="#3a9ae8"/><circle cx="10" cy="10.500" r="3.200" fill="#0d0d0d"/><rect x="9" y="9.500" width="8" height="2" fill="#3a9ae8"/><rect x="12" y="11.500" width="6" height="3" fill="#0d0d0d"/><path d="M13 13.500c1 0 2.500 0 3.500-.5-1 2-3 3.500-5 3.500z" fill="#3a9ae8"/><path d="M2.500 17c-2-3 3-11 9-13.500 3-1.500 6-1 5.500 2" fill="none" stroke="#f0c030" stroke-width="1.600"/></svg>
<div class="tk" style="left:360px;width:156px;"><span style="position:absolute;left:27px;top:0">AutoCAD 2006 - [Dra...</span></div>
<svg class="i" style="left:366.0px;top:743.0px" width="20" height="20" viewBox="0 0 20 20"><rect x="2.500" y="2.500" width="15" height="15" fill="#2a9a86" stroke="#dffff6" stroke-width="1.100"/><path d="M4.500 13L8.300 3.800L11.500 11.500" fill="none" stroke="#dffff6" stroke-width="1.100"/><path d="M3 13.500H17M14.500 3V17" stroke="#dffff6" stroke-width="1"/><rect x="3.500" y="14.500" width="9.500" height="2" fill="#1f8070"/><rect x="12.700" y="11.700" width="3.600" height="3.600" fill="#2a9a86" stroke="#dffff6" stroke-width="1"/></svg>
<div class="tk" style="left:520px;width:156px;"><span style="position:absolute;left:27px;top:0">1.jpg - <span class="c">画图</span></span></div>
<svg class="i" style="left:526.0px;top:743.0px" width="20" height="20" viewBox="0 0 20 20"><path d="M5 4l2 8M8 2.500l1 9M11.500 3l-1 9M14.500 5l-2.500 7" stroke="#e8a040" stroke-width="1.800"/><path d="M5 4l.5 2M8 2.500l.3 2M11.500 3l-.3 2M14.500 5l-.7 2" stroke="#d03020" stroke-width="1.900"/><path d="M5.500 10.500h8.500l-1.500 7h-5.500z" fill="#b8c0c8" stroke="#6a7078" stroke-width=".8"/><path d="M8 11.500l-.5 5" stroke="#fff" stroke-width="1"/></svg>
<div class="tk" style="left:680px;width:156px;background:linear-gradient(#3e3e3e 0,#333 46%,#1b1f1d 47%,#171717 100%);border-color:#1a1a1a #555 #999 #999;"><span style="position:absolute;left:27px;top:0">AutoCAD <span class="c">文本窗口</span> -...</span></div>
<svg class="i" style="left:686.0px;top:743.0px" width="20" height="20" viewBox="0 0 20 20"><rect x="2.500" y="3" width="15" height="14" fill="#fff" stroke="#ddd" stroke-width=".6"/><rect x="2.500" y="3" width="15" height="2.500" fill="#1c2a8a"/><path d="M4 8h5M4 10.500h5M4 13h5M4 15.500h5" stroke="#555" stroke-width="1.300" stroke-dasharray="1 1"/></svg>
<svg class="i" style="left:1076.0px;top:744.0px" width="20" height="20" viewBox="0 0 20 20"><rect x="2.500" y="8.500" width="15" height="7.500" fill="#f0f0f0" stroke="#aaa" stroke-width=".6"/><path d="M4 10.500h12M4 12.500h12" stroke="#333" stroke-width="1.200" stroke-dasharray="1.200 .8"/><path d="M5.500 14.500h9" stroke="#333" stroke-width="1"/><path d="M5 7.500c1-2 3-1 4-2s3 0 4-1" stroke="#ddd" stroke-width=".9" fill="none"/></svg>
<svg class="i" style="left:1098.0px;top:744.0px" width="20" height="20" viewBox="0 0 20 20"><rect x="4" y="2.500" width="11.500" height="13" fill="#fffde8" stroke="#333" stroke-width="1"/><path d="M5 17.500h12v-13" fill="none" stroke="#888" stroke-width="1"/><text x="9.800" y="13.500" text-anchor="middle" font-family="Liberation Sans,sans-serif" font-size="12" font-weight="bold" fill="#111">?</text></svg>
<svg class="i" style="left:1123.0px;top:744.0px" width="20" height="20" viewBox="0 0 20 20"><circle cx="10" cy="10" r="7.500" fill="#4a4a4a" stroke="#6a6a6a" stroke-width="1"/><path d="M11.500 6.500L8 10l3.500 3.500" fill="none" stroke="#ddd" stroke-width="1.800"/></svg>
<svg class="i" style="left:1142.0px;top:744.0px" width="20" height="20" viewBox="0 0 20 20"><rect x="2.500" y="2.500" width="15" height="15" fill="#1c6ac8" stroke="#4a9af0" stroke-width=".8"/><path d="M4 11c3-5 8-6 12-6.500-4 1.500-7 4-8 7 2-2 5-2.500 7-2-3 .5-5 3-6 5.500-.5-2-2-3.500-5-4z" fill="#fff"/></svg>
<svg class="i" style="left:1160.0px;top:744.0px" width="20" height="20" viewBox="0 0 20 20"><ellipse cx="9" cy="6.500" rx="4" ry="4.500" fill="#1a1a1a"/><ellipse cx="9" cy="12.500" rx="5.500" ry="5" fill="#1a1a1a"/><ellipse cx="9" cy="13" rx="3.300" ry="3.800" fill="#fff"/><path d="M4 10.500h10l-1 2.500h-8z" fill="#e03020"/><ellipse cx="9" cy="8.300" rx="2.200" ry="1" fill="#f0a020"/><circle cx="7.500" cy="5.500" r="1" fill="#fff"/><circle cx="10.500" cy="5.500" r="1" fill="#fff"/><circle cx="14.500" cy="14" r="3.500" fill="#f0a830" stroke="#a86a10" stroke-width=".6"/><path d="M12.500 13h4M12.500 15h4" stroke="#fff" stroke-width="1"/></svg>
<svg class="i" style="left:1177.0px;top:744.0px" width="20" height="20" viewBox="0 0 20 20"><rect x="8" y="2.500" width="8.500" height="7" fill="#5ab0f0" stroke="#bfe0ff" stroke-width=".8"/><rect x="3" y="7" width="8.500" height="7" fill="#3a90e0" stroke="#bfe0ff" stroke-width=".8"/><path d="M5 16.500h5M11 12h4" stroke="#c8d8e8" stroke-width="1.600"/></svg>
<svg class="i" style="left:1196.0px;top:744.0px" width="20" height="20" viewBox="0 0 20 20"><rect x="8" y="2.500" width="8" height="7" fill="#4a3a9a" stroke="#b0a8e0" stroke-width=".8"/><rect x="3" y="6" width="8" height="7" fill="#2a2a7a" stroke="#b0a8e0" stroke-width=".8"/><path d="M12 8.500l6 9.500h-12z" fill="#f8e020" stroke="#a89010" stroke-width=".6"/><path d="M12 11.500v3.500M12 16v1" stroke="#111" stroke-width="1.400"/></svg>
<svg class="i" style="left:1214.0px;top:744.0px" width="20" height="20" viewBox="0 0 20 20"><path d="M3 5c5-3 10-3 14.500-1.500-.5 6-1 10-3.500 14-4 .5-8 .5-11-1.500z" fill="#3aa84a" stroke="#8ae09a" stroke-width=".8"/><circle cx="10" cy="10.500" r="4" fill="none" stroke="#c8f8d0" stroke-width="1.600"/><circle cx="10" cy="10.500" r="1.300" fill="#c8f8d0"/></svg>
<div class="t" style="left:1241px;top:746px;color:#fff;font-size:12px;line-height:15px;letter-spacing:.3px">8:06</div>
<div style="left:95px;top:175px;width:135px;height:56px;background:#efebde;border:1px solid #dcdcdc;border-right-color:#9a9a9a;border-bottom-color:#9a9a9a;box-shadow:inset 1px 1px 0 #f6f6f6,inset -1px -1px 0 #cfcfcf"></div>
<div style="left:99px;top:179px;width:128px;height:17px;background:#353535"></div>
<div class="t" style="left:101px;top:179px;color:#fff;font-weight:bold;font-size:12px;line-height:16px">查询</div>
<div style="left:210px;top:181px;width:14px;height:12px;background:#f0f0f0;border:1px solid #fff;border-right-color:#555;border-bottom-color:#555"></div>
<svg class="i" style="left:210px;top:181px" width="14" height="12"><path d="M3.500 2.500l6.500 6.500M10 2.500l-6.500 6.500" stroke="#000" stroke-width="1.600" fill="none"/></svg>
<svg class="i" style="left:103.0px;top:202.0px" width="20" height="20" viewBox="0 0 20 20"><path d="M3.500 8.500h13" stroke="#2a5a9a" stroke-width="1.500" stroke-dasharray="1.800 1.400"/><rect x="2" y="7" width="3" height="3" fill="#2a5a9a"/><rect x="15" y="7" width="3" height="3" fill="#2a5a9a"/><rect x="2" y="12.500" width="16" height="3.500" fill="#f0c030" stroke="#a87a10" stroke-width=".6"/><path d="M4 12.500v2M6 12.500v2M8 12.500v2M10 12.500v2M12 12.500v2M14 12.500v2M16 12.500v2" stroke="#3a2600" stroke-width="1"/></svg>
<svg class="i" style="left:126.0px;top:202.0px" width="20" height="20" viewBox="0 0 20 20"><path d="M3 3l14 5v6h-14z" fill="url(#gBd)" stroke="#1c3f7a" stroke-width=".7"/><rect x="2" y="14.500" width="16" height="3.500" fill="#f0c030" stroke="#a87a10" stroke-width=".6"/><path d="M4 14.500v2M6 14.500v2M8 14.500v2M10 14.500v2M12 14.500v2M14 14.500v2M16 14.500v2" stroke="#3a2600" stroke-width="1"/></svg>
<svg class="i" style="left:149.0px;top:202.0px" width="20" height="20" viewBox="0 0 20 20"><path d="M3 6l8-3.500 6.500 3.500v6.500l-4 2h-10.500z" fill="url(#gBd)" stroke="#1c3f7a" stroke-width=".7"/><path d="M3 6l10.500 2.500 4-2M13.500 8.500v6" stroke="#cfe0f4" stroke-width=".8" fill="none"/><rect x="2" y="15" width="16" height="3.500" fill="#f0c030" stroke="#a87a10" stroke-width=".6"/><path d="M4 15v2M6 15v2M8 15v2M10 15v2M12 15v2M14 15v2M16 15v2" stroke="#3a2600" stroke-width="1"/></svg>
<svg class="i" style="left:177.0px;top:202.0px" width="20" height="20" viewBox="0 0 20 20"><path d="M6 3.500c-2 0-2 2.500 0 2.500v9c0 2-3 1.500-3 0 0 3 2.500 3.500 4 3.500h7c2 0 2-2 2-3.500v-9c0-2.500-1.500-2.500-3-2.500z" fill="#a9c4e0" stroke="#4a6a9a" stroke-width=".8"/><path d="M8 7h6M8 9.500h6M8 12h6M8 14.500h5" stroke="#2a3a5a" stroke-width="1"/></svg>
<svg class="i" style="left:201.0px;top:202.0px" width="20" height="20" viewBox="0 0 20 20"><path d="M4 3v13.500h13.500" fill="none" stroke="#2a5ab0" stroke-width="1.500"/><path d="M4 1.500l-2 3h4zM18.500 16.500l-3-2v4z" fill="#2a5ab0"/><path d="M4 16.500l6-7" stroke="#5a7ab0" stroke-width="1"/><circle cx="11.500" cy="6.500" r="3.800" fill="url(#gLens)" stroke="#3a5a8a" stroke-width="1.200"/><rect x="10.200" y="5.200" width="2.600" height="2.600" fill="#2a5a9a"/><path d="M14 9.500l4 4" stroke="#c8902a" stroke-width="1.800"/></svg>
<div class="sep" style="left:173px;top:203px;width:1px;height:20px;"></div>
<div style="left:417px;top:234px;width:654px;height:388px;background:#232323;border-radius:7px 7px 0 0;border:1px solid #6e6e6e;border-top-color:#555"></div>
<div style="left:418px;top:235px;width:652px;height:28px;border-radius:6px 6px 0 0;background:linear-gradient(#6e6e6e 0,#747474 5%,#676767 12%,#5d5d5d 47%,#3f3f3f 50%,#2e2e2e 96%,#0a0a0a 100%)"></div>
<div style="left:420px;top:263px;width:648.5px;height:356.3px;background:#dedede"></div>
<div style="left:420px;top:618px;width:648.5px;height:1.3px;background:#fff"></div>
<svg class="i" style="left:420.0px;top:240.0px" width="18" height="18" viewBox="0 0 20 20"><rect x="2.500" y="3" width="15" height="14" fill="#fff" stroke="#ddd" stroke-width=".6"/><rect x="2.500" y="3" width="15" height="2.500" fill="#1c2a8a"/><path d="M4 8h5M4 10.500h5M4 13h5M4 15.500h5" stroke="#555" stroke-width="1.300" stroke-dasharray="1 1"/></svg>
<div class="t" style="left:442px;top:242px;color:#fff;font-weight:bold;font-size:11.5px;line-height:16px">AutoCAD <span style="font-size:12px">文本窗口</span> - Drawing1.dwg</div>
<div style="left:1000px;top:240px;width:19px;height:19px;background:linear-gradient(#4a4a4a,#2b2b2b);border:1px solid #6a6a6a;border-radius:3px"></div>
<svg class="i" style="left:1000px;top:240px" width="19" height="19"><rect x="4.500" y="12" width="6" height="3" fill="#fff"/></svg>
<div style="left:1023px;top:240px;width:19px;height:19px;background:linear-gradient(#4a4a4a,#2b2b2b);border:1px solid #6a6a6a;border-radius:3px"></div>
<svg class="i" style="left:1023px;top:240px" width="19" height="19"><rect x="4.500" y="4.500" width="10" height="10" fill="none" stroke="#fff" stroke-width="1"/><rect x="4" y="4" width="11" height="3" fill="#fff"/></svg>
<div style="left:1046px;top:240px;width:19px;height:19px;background:linear-gradient(#e8755a,#c8391c);border:1px solid #6a6a6a;border-radius:3px"></div>
<svg class="i" style="left:1046px;top:240px" width="19" height="19"><path d="M5 5l9 9M14 5l-9 9" stroke="#fff" stroke-width="2.2" fill="none"/></svg>
<div class="t" style="left:426px;top:264px;font-size:12px;line-height:16px;color:#222">编辑(<u>E</u>)</div>
<div style="left:421px;top:283px;width:645px;height:1px;background:#9a9a9a"></div>
<div style="left:421px;top:284px;width:645px;height:1px;background:#fff"></div>
<div style="left:423.5px;top:286.5px;width:639.5px;height:328px;background:#fff;border:2px solid;border-color:#3c3c3c #efefef #efefef #3c3c3c"></div>
<div style="left:1046px;top:288px;width:16px;height:308px;background:#f4f4f4"></div>
<div class="dd" style="left:1046px;top:289px;width:16px;height:17px;"></div>
<svg class="i" style="left:1046px;top:289px" width="16" height="17"><path d="M4.5 10.5l3.5 -3.5l3.5 3.5" fill="none" stroke="#444" stroke-width="2"/></svg>
<div class="dd" style="left:1046px;top:563px;width:16px;height:16px;"></div>
<div style="left:1050px;top:567px;width:8px;height:1px;background:#888"></div>
<div style="left:1050px;top:569px;width:8px;height:1px;background:#888"></div>
<div style="left:1050px;top:571px;width:8px;height:1px;background:#888"></div>
<div style="left:1050px;top:573px;width:8px;height:1px;background:#888"></div>
<div class="dd" style="left:1046px;top:580px;width:16px;height:17px;"></div>
<svg class="i" style="left:1046px;top:580px" width="16" height="17"><path d="M4.5 6.5l3.5 3.5l3.5 -3.5" fill="none" stroke="#444" stroke-width="2"/></svg>
<div class="tw" style="left:427px;top:290px"><span class="c">命令</span>: <span class="c">指定对角点</span>:</div>
<div class="tw" style="left:427px;top:303px"><span class="c">命令</span>:</div>
<div class="tw" style="left:427px;top:316px"><span class="c">命令</span>:</div>
<div class="tw" style="left:427px;top:329px"><span class="c">命令</span>: _move <span class="c">找到</span> 1 <span class="c">个</span></div>
<div class="tw" style="left:427px;top:355px"><span class="c">指定基点或</span> [<span class="c">位移</span>(D)] &lt;<span class="c">位移</span>&gt;:  <span class="c">指定第二个点或</span> &lt;<span class="c">使用第一个点作为位移</span>&gt;:</div>
<div class="tw" style="left:427px;top:368px"><span class="c">命令</span>: *<span class="c">取消</span>*</div>
<div class="tw" style="left:427px;top:394px"><span class="c">命令</span>:</div>
<div class="tw" style="left:427px;top:407px"><span class="c">命令</span>:</div>
<div class="tw" style="left:427px;top:420px"><span class="c">命令</span>: _list</div>
<div class="tw" style="left:427px;top:433px"><span class="c">选择对象</span>: <span class="c">找到</span> 1 <span class="c">个</span></div>
<div class="tw" style="left:427px;top:459px"><span class="c">选择对象</span>:</div>
<div class="tw" style="left:427px;top:485px">                  CIRCLE    <span class="c">图层</span>: 0</div>
<div class="tw" style="left:427px;top:498px">                            <span class="c">空间</span>: <span class="c">模型空间</span></div>
<div class="tw" style="left:427px;top:511px">                   <span class="c">句柄</span> = f8</div>
<div class="tw" style="left:427px;top:524px">              <span class="c">圆心</span> <span class="c">点</span>,  X= 444.6601  Y= 476.1504  Z=   0.0000</div>
<div class="tw" style="left:427px;top:537px">              <span class="c">半径</span>  248.6991</div>
<div class="tw" style="left:427px;top:550px">     <span class="c">周长</span> 1562.6224</div>
<div class="tw" style="left:427px;top:563px">              <span class="c">面积</span> 194311.3703</div>
<div style="left:425.5px;top:597.5px;width:635.5px;height:1.5px;background:#b4b4b4"></div>
<div class="tw" style="left:427px;top:601px"><span class="c">命令</span>:</div>
<div class="dd" style="left:979px;top:599px;width:17px;height:14px;"></div>
<svg class="i" style="left:979px;top:599px" width="17" height="14"><path d="M10.5 3.5l-3.5 3.5l3.5 3.5" fill="none" stroke="#444" stroke-width="2"/></svg>
<div class="dd" style="left:997px;top:599px;width:16px;height:14px;"></div>
<div style="left:1001px;top:603px;width:1px;height:6px;background:#888"></div>
<div style="left:1003px;top:603px;width:1px;height:6px;background:#888"></div>
<div style="left:1005px;top:603px;width:1px;height:6px;background:#888"></div>
<div style="left:1007px;top:603px;width:1px;height:6px;background:#888"></div>
<div class="dd" style="left:1027px;top:599px;width:17px;height:14px;"></div>
<svg class="i" style="left:1027px;top:599px" width="17" height="14"><path d="M6.5 3.5l3.5 3.5l-3.5 3.5" fill="none" stroke="#444" stroke-width="2"/></svg>
<svg class="i" style="left:440px;top:455px" width="500" height="130" viewBox="440 455 500 130"><rect x="450.500" y="477.500" width="478" height="102.500" fill="none" stroke="#c8232c" stroke-width="1"/><path d="M694.500 458.500V477M682 462.500L694.500 477L707 464" fill="none" stroke="#d83a42" stroke-width="1"/></svg>
<div class="t serif" style="left:640px;top:380px;font-size:28px;line-height:28px;color:#e6404a;letter-spacing:0">这里就是左面圆的周长、面积</div>
<div class="t serif" style="left:640px;top:408px;font-size:28px;line-height:28px;color:#e6404a;letter-spacing:0">等数据<span style="position:relative;top:-3px">。。。。。。</span></div>
</body></html>
